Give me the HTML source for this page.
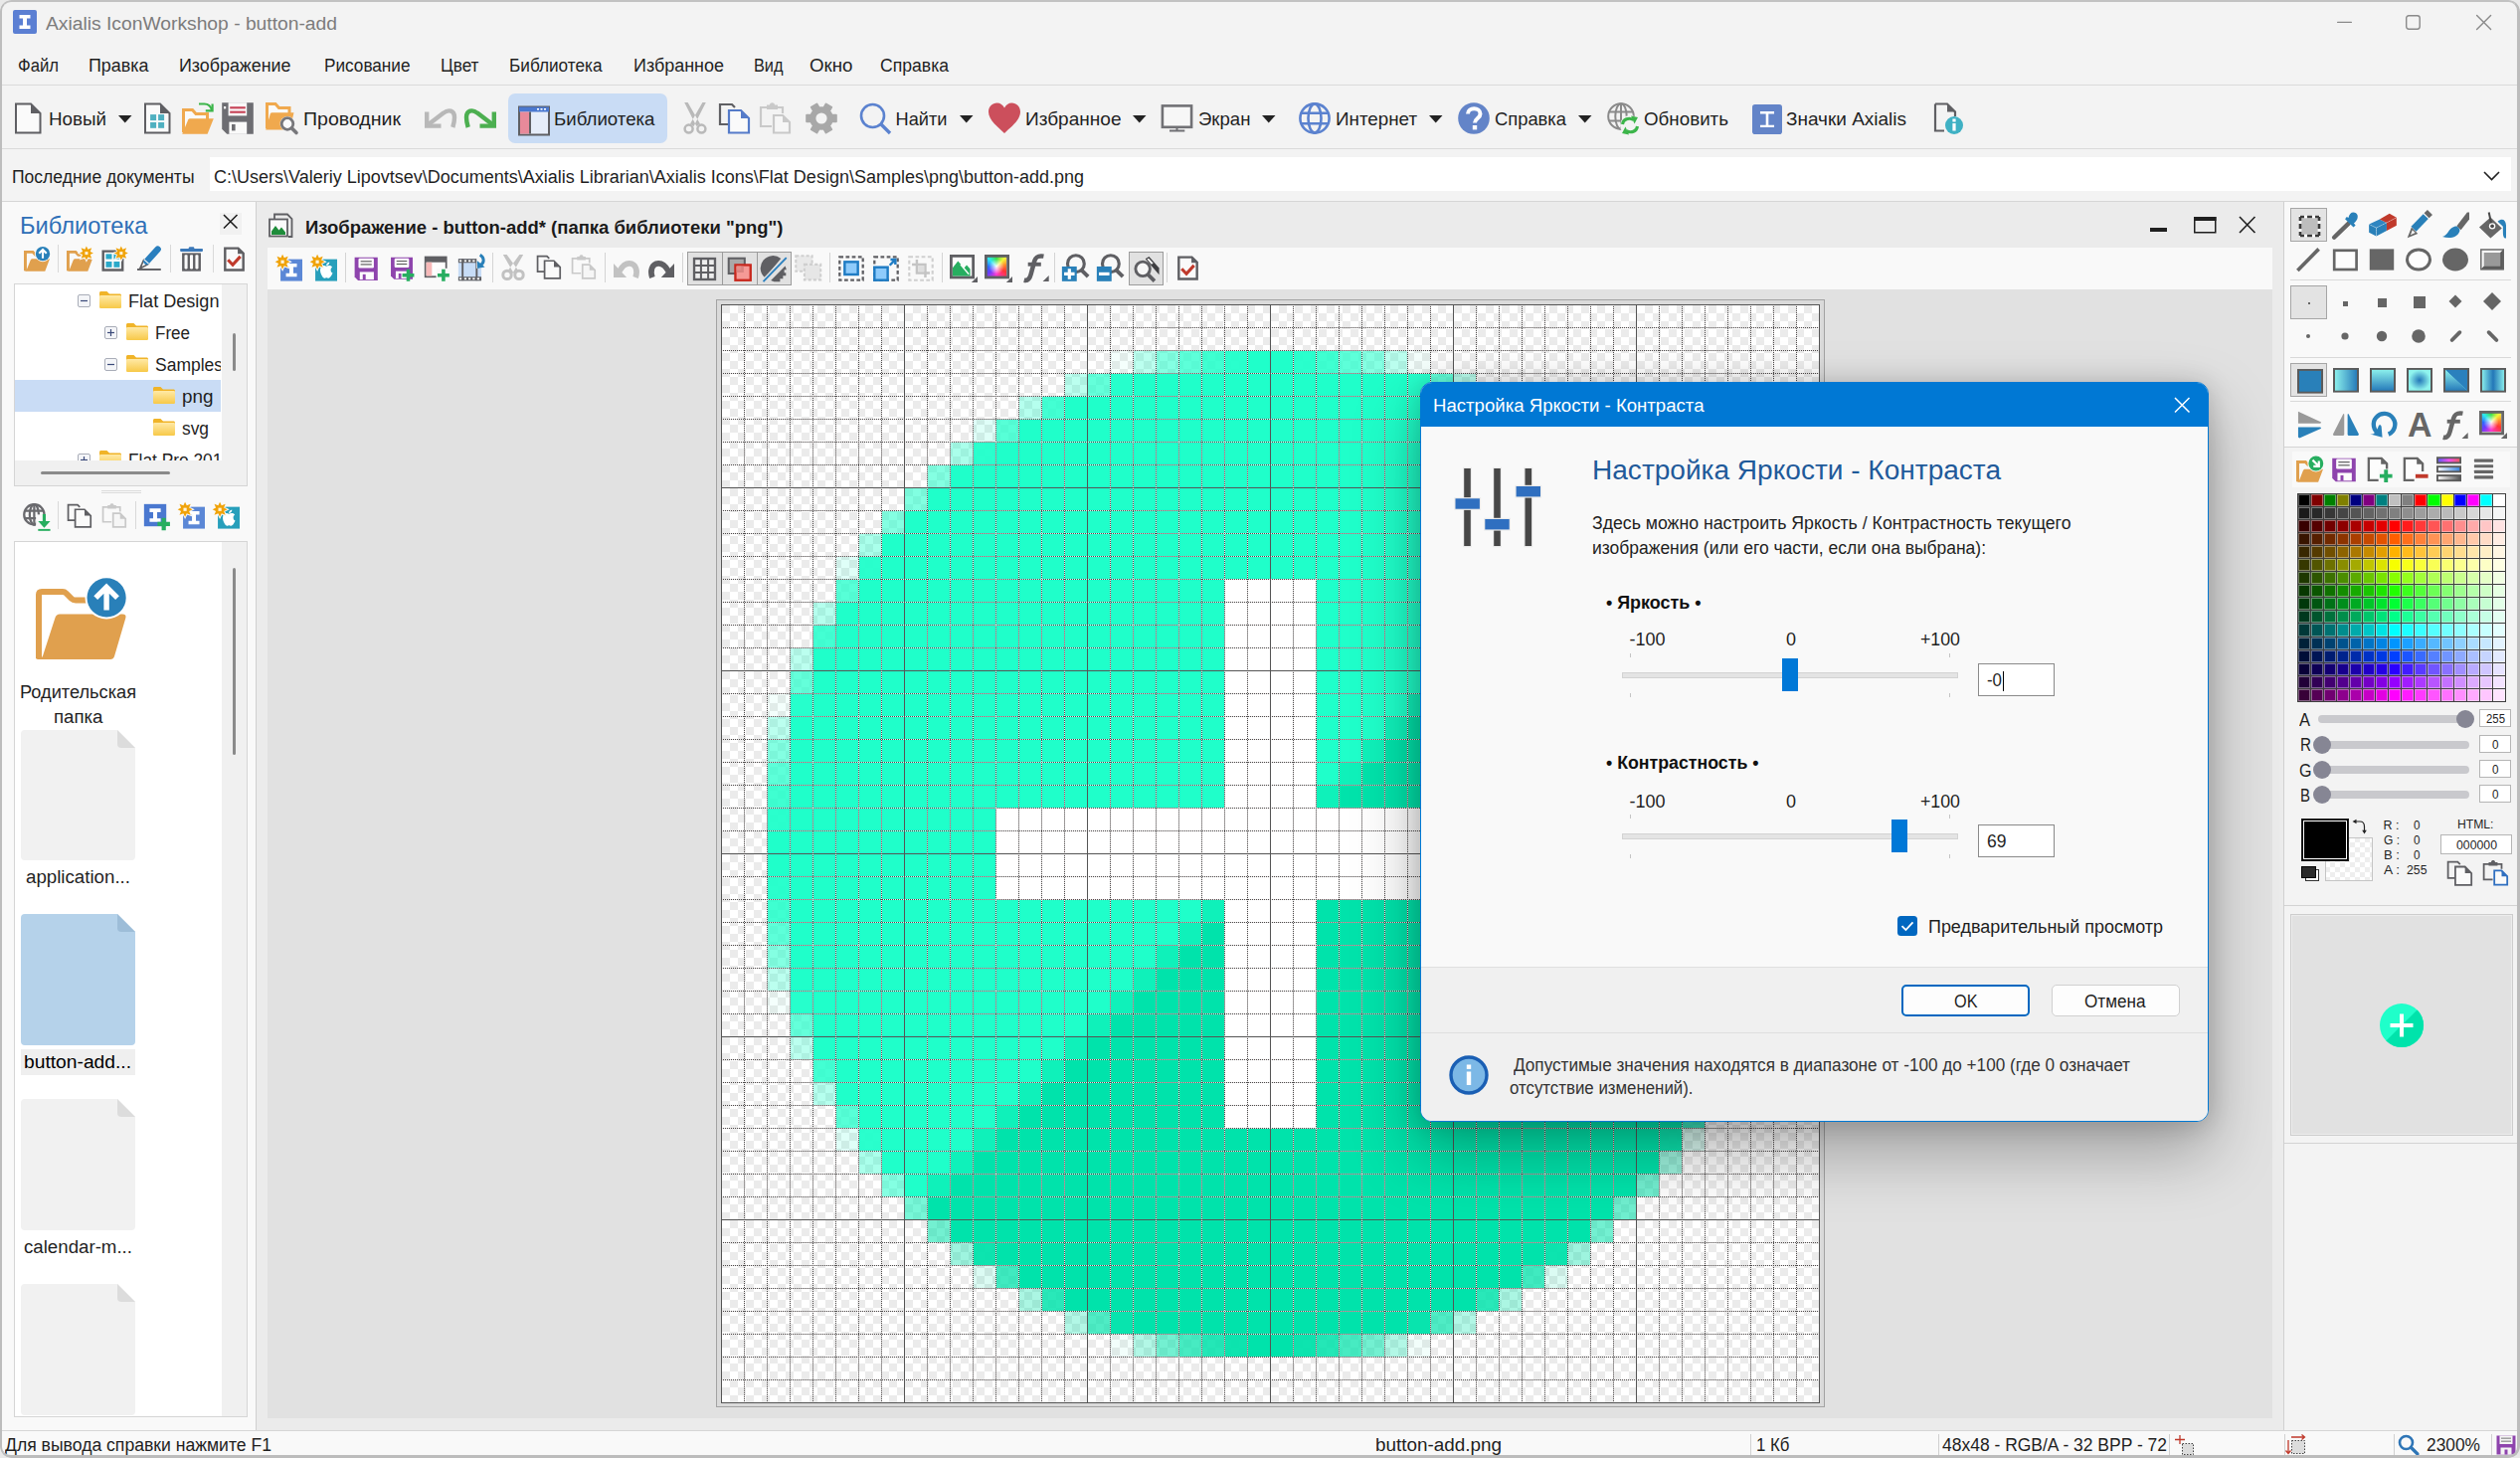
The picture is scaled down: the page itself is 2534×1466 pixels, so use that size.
<!DOCTYPE html>
<html lang="ru"><head><meta charset="utf-8"><title>Axialis IconWorkshop - button-add</title>
<style>
html,body{margin:0;padding:0;}
body{width:2534px;height:1466px;overflow:hidden;position:relative;background:#f3f3f3;font-family:"Liberation Sans", sans-serif;}
.a{position:absolute;box-sizing:border-box;display:block;}
svg.a{overflow:visible;}
.t{position:absolute;white-space:pre;line-height:1;transform-origin:0 50%;margin:0;padding:0;}

</style></head><body>
<header id="app-chrome" aria-label="Title bar, menu and toolbar">
<div class="a" style="left:13px;top:10px;width:24px;height:24px;background:#5b7fd3;border-radius:2px;"></div>
<svg class="a" style="left:13px;top:10px;" width="24" height="24" viewBox="0 0 24 24"><path d="M6.5 5H17.5V8.6H14V15.4H17.5V19H6.5V15.4H10V8.6H6.5Z" fill="#fff"/></svg>
<span id="t0" class="t" style="left:46.0px;top:15.3px;font-size:18px;color:#7c7c7c;transform:scaleX(1.0701);">Axialis IconWorkshop - button-add</span>
<svg class="a" style="left:2350px;top:21px;" width="18" height="3" viewBox="0 0 18 3"><rect width="15" height="1.3" y="0.8" rx="0.6" fill="#8a8a8a"/></svg>
<svg class="a" style="left:2419px;top:15px;" width="16" height="16" viewBox="0 0 16 16"><rect x="0.7" y="0.7" width="13.5" height="13.5" rx="2.4" fill="none" stroke="#8a8a8a" stroke-width="1.4"/></svg>
<svg class="a" style="left:2490px;top:15px;" width="16" height="16" viewBox="0 0 16 16"><path d="M0.6 0.6L14.6 14.6M14.6 0.6L0.6 14.6" stroke="#8a8a8a" stroke-width="1.4" stroke-linecap="round"/></svg>
<span id="t1" class="t" style="left:18.0px;top:57.3px;font-size:18px;color:#1f1f1f;transform:scaleX(0.9262);">Файл</span>
<span id="t2" class="t" style="left:88.5px;top:57.3px;font-size:18px;color:#1f1f1f;transform:scaleX(0.9949);">Правка</span>
<span id="t3" class="t" style="left:179.5px;top:57.3px;font-size:18px;color:#1f1f1f;transform:scaleX(0.9921);">Изображение</span>
<span id="t4" class="t" style="left:325.5px;top:57.3px;font-size:18px;color:#1f1f1f;transform:scaleX(0.9542);">Рисование</span>
<span id="t5" class="t" style="left:442.5px;top:57.3px;font-size:18px;color:#1f1f1f;transform:scaleX(0.9543);">Цвет</span>
<span id="t6" class="t" style="left:511.5px;top:57.3px;font-size:18px;color:#1f1f1f;transform:scaleX(0.9553);">Библиотека</span>
<span id="t7" class="t" style="left:637.0px;top:57.3px;font-size:18px;color:#1f1f1f;transform:scaleX(0.9974);">Избранное</span>
<span id="t8" class="t" style="left:757.5px;top:57.3px;font-size:18px;color:#1f1f1f;transform:scaleX(0.9055);">Вид</span>
<span id="t9" class="t" style="left:814.0px;top:57.3px;font-size:18px;color:#1f1f1f;transform:scaleX(1.0400);">Окно</span>
<span id="t10" class="t" style="left:885.0px;top:57.3px;font-size:18px;color:#1f1f1f;transform:scaleX(0.9770);">Справка</span>
<div class="a" style="left:2px;top:85px;width:2530px;height:1px;background:#dadada;"></div>
<svg class="a" style="left:12px;top:103px;" width="32" height="32" viewBox="0 0 32 32"><path d="M4 1.5H19L28.5 11V30.5H4Z" fill="#fafafa" stroke="#5f5f63" stroke-width="2"/><path d="M19 1.5V11H28.5Z" fill="#5f5f63"/></svg>
<span id="t11" class="t" style="left:49.0px;top:111.1px;font-size:18.2px;color:#1f1f1f;transform:scaleX(1.0328);">Новый</span>
<svg class="a" style="left:119px;top:116px;" width="14" height="8" viewBox="0 0 14 8"><path d="M0 0H13.5L6.75 7.5Z" fill="#222"/></svg>
<svg class="a" style="left:142px;top:103px;" width="32" height="32" viewBox="0 0 32 32"><path d="M4 1.5H19L28.5 11V30.5H4Z" fill="#fafafa" stroke="#5f5f63" stroke-width="2"/><path d="M19 1.5V11H28.5Z" fill="#5f5f63"/><rect x="9.1" y="12.1" width="6" height="6" fill="#4fb0c0"/><rect x="17.1" y="12.1" width="6" height="6" fill="#4fb0c0"/><rect x="9.1" y="20" width="6" height="5.8" fill="#4fb0c0"/><rect x="17.1" y="20" width="6" height="5.8" fill="#4fb0c0"/></svg>
<svg class="a" style="left:183px;top:103px;" width="32" height="32" viewBox="0 0 32 32"><path d="M1.5 30V7.5H10.5L14 11.5H25.5V17" fill="#fafafa" stroke="#f0a94e" stroke-width="3"/><path d="M8 16.2H31.8L25.6 31.7H0.2L6.3 17.3Q6.8 16.2 8 16.2Z" fill="#f0a94e"/><path d="M17 1.6H22.5C26.5 1.6 29 4 30 8" fill="none" stroke="#3cb54a" stroke-width="2"/><path d="M23.8 8.4H30.6V1.6" fill="none" stroke="#3cb54a" stroke-width="2.2"/></svg>
<svg class="a" style="left:223px;top:103px;" width="32" height="32" viewBox="0 0 32 32"><path d="M0.2 0.2H31.8V31.8H5.2L0.2 26.8Z" fill="#6d6d72"/><rect x="6.6" y="0.2" width="18.6" height="13.2" fill="#fafafa"/><rect x="8.2" y="4.2" width="15.6" height="2.2" fill="#c8465a"/><rect x="8.2" y="8.6" width="15.6" height="2.2" fill="#c8465a"/><rect x="7.4" y="19.6" width="17.8" height="12.2" fill="#fafafa"/><rect x="10" y="22" width="3.6" height="6.4" fill="#6d6d72"/><rect x="2" y="4" width="2.2" height="2.4" fill="#fafafa"/></svg>
<svg class="a" style="left:267px;top:103px;" width="32" height="32" viewBox="0 0 32 32"><path d="M1.5 26V1.5H10L13.5 5.5H24V11" fill="#fafafa" stroke="#f0a94e" stroke-width="3"/><path d="M6.5 10.2H28.5L24.5 27.6H0.2L4.8 11.5Q5.2 10.2 6.5 10.2Z" fill="#f0a94e"/><circle cx="22" cy="21.5" r="7.4" fill="#f3f3f3"/><circle cx="22" cy="21.5" r="5.8" fill="#fafafa" stroke="#77777b" stroke-width="2.8"/><path d="M26.5 26L31 30.5" stroke="#77777b" stroke-width="3.6" stroke-linecap="round"/></svg>
<span id="t12" class="t" style="left:304.5px;top:111.1px;font-size:18.2px;color:#1f1f1f;transform:scaleX(1.0740);">Проводник</span>
<svg class="a" style="left:427px;top:106px;" width="32" height="26" viewBox="0 0 32 26"><path d="M2.2 6.5V20.6H16.5" fill="none" stroke="#b8b8b8" stroke-width="4.4"/><path d="M3 19.8L19 7.6C24 3.6 30 5 30 12C30 16 29.4 18.5 28.3 22" fill="none" stroke="#b8b8b8" stroke-width="4.4"/></svg>
<svg class="a" style="left:467px;top:106px;" width="32" height="26" viewBox="0 0 32 26"><g transform="translate(32 0) scale(-1 1)"><path d="M2.2 6.5V20.6H16.5" fill="none" stroke="#4caf50" stroke-width="4.4"/><path d="M3 19.8L19 7.6C24 3.6 30 5 30 12C30 16 29.4 18.5 28.3 22" fill="none" stroke="#4caf50" stroke-width="4.4"/></g></svg>
<div class="a" style="left:511px;top:94px;width:160px;height:50px;background:#c9dcf5;border-radius:7px;"></div>
<svg class="a" style="left:521px;top:106px;" width="32" height="31" viewBox="0 0 32 31"><rect x="1" y="1.5" width="30" height="28" fill="#e6edf9" stroke="#5f5f63" stroke-width="2"/><rect x="1" y="1.5" width="30" height="5" fill="#4a78d0"/><rect x="2" y="6.5" width="9" height="22" fill="#e88a9a"/><rect x="11" y="6.5" width="2" height="22" fill="#5f5f63"/><rect x="19" y="3" width="2" height="1.6" fill="#fff"/><rect x="22.5" y="3" width="2" height="1.6" fill="#fff"/><rect x="26" y="3" width="2" height="1.6" fill="#fff"/></svg>
<span id="t13" class="t" style="left:556.5px;top:111.1px;font-size:18.2px;color:#1f1f1f;transform:scaleX(1.0262);">Библиотека</span>
<svg class="a" style="left:687px;top:103px;" width="24" height="32" viewBox="0 0 24 32"><path d="M1.2 0L4.6 0L17 21.5L13.4 24ZM22.8 0L19.4 0L7 21.5L10.6 24Z" fill="#b9b9b9"/><circle cx="5.6" cy="26.6" r="4" fill="none" stroke="#b9b9b9" stroke-width="2.5"/><circle cx="18.4" cy="26.6" r="4" fill="none" stroke="#b9b9b9" stroke-width="2.5"/></svg>
<svg class="a" style="left:722px;top:103px;" width="32" height="32" viewBox="0 0 32 32"><path d="M11 22H2V2H14L17 5" fill="none" stroke="#5f5f63" stroke-width="2.2"/><path d="M11 8H23L31 16V30.5H11Z" fill="#fafafa" stroke="#557bc9" stroke-width="2.2"/><path d="M23 8V16H31Z" fill="#557bc9"/></svg>
<svg class="a" style="left:763px;top:103px;" width="32" height="32" viewBox="0 0 32 32"><path d="M13 24H2V5H24V11" fill="none" stroke="#c9c9c9" stroke-width="2.2"/><path d="M8 5V2.5H11C11 -0.5 16 -0.5 16 2.5H19V7H8Z" fill="#c9c9c9"/><path d="M15 13H24L31 20V30.5H15Z" fill="#f6f6f6" stroke="#c9c9c9" stroke-width="2.2"/><path d="M24 13V20H31Z" fill="#c9c9c9"/></svg>
<svg class="a" style="left:810px;top:103px;" width="32" height="32" viewBox="0 0 32 32"><rect x="11.8" y="0.2" width="8.4" height="31.6" rx="1" fill="#a8a8a8" transform="rotate(30 16 16)"/><rect x="11.8" y="0.2" width="8.4" height="31.6" rx="1" fill="#a8a8a8" transform="rotate(90 16 16)"/><rect x="11.8" y="0.2" width="8.4" height="31.6" rx="1" fill="#a8a8a8" transform="rotate(150 16 16)"/><circle cx="16" cy="16" r="11.8" fill="#a8a8a8"/><circle cx="16" cy="16" r="5.6" fill="#f3f3f3"/></svg>
<svg class="a" style="left:864px;top:103px;" width="32" height="32" viewBox="0 0 32 32"><circle cx="13.5" cy="13.5" r="11.5" fill="none" stroke="#5b82cf" stroke-width="2.6"/><path d="M21.5 21.5L31 31" stroke="#5b82cf" stroke-width="3.4"/></svg>
<span id="t14" class="t" style="left:900.5px;top:111.1px;font-size:18.2px;color:#1f1f1f;">Найти</span>
<svg class="a" style="left:965px;top:116px;" width="14" height="8" viewBox="0 0 14 8"><path d="M0 0H13.5L6.75 7.5Z" fill="#222"/></svg>
<svg class="a" style="left:994px;top:103px;" width="32" height="32" viewBox="0 0 32 32"><path d="M16 31C10 25 0 18 0 9.5C0 4 4 0.5 8.5 0.5C12 0.5 14.5 2.5 16 5.5C17.5 2.5 20 0.5 23.5 0.5C28 0.5 32 4 32 9.5C32 18 22 25 16 31Z" fill="#cc4f5c"/></svg>
<span id="t15" class="t" style="left:1030.5px;top:111.1px;font-size:18.2px;color:#1f1f1f;transform:scaleX(1.0470);">Избранное</span>
<svg class="a" style="left:1139px;top:116px;" width="14" height="8" viewBox="0 0 14 8"><path d="M0 0H13.5L6.75 7.5Z" fill="#222"/></svg>
<svg class="a" style="left:1167px;top:104px;" width="33" height="31" viewBox="0 0 32 31"><rect x="1.4" y="2.4" width="29.2" height="21.4" fill="#f7f7f7" stroke="#717175" stroke-width="2.6"/><path d="M16 24V27.6M8.5 27.4H23.8" stroke="#717175" stroke-width="2"/></svg>
<span id="t16" class="t" style="left:1204.5px;top:111.1px;font-size:18.2px;color:#1f1f1f;transform:scaleX(1.0231);">Экран</span>
<svg class="a" style="left:1269px;top:116px;" width="14" height="8" viewBox="0 0 14 8"><path d="M0 0H13.5L6.75 7.5Z" fill="#222"/></svg>
<svg class="a" style="left:1306px;top:103px;" width="32" height="32" viewBox="0 0 32 32"><circle cx="16" cy="16" r="14.6" fill="none" stroke="#5b82cf" stroke-width="2.6"/><ellipse cx="16" cy="16" rx="6.5" ry="14.6" fill="none" stroke="#5b82cf" stroke-width="2.6"/><path d="M2.4 10.7H29.6M2.4 21.3H29.6" stroke="#5b82cf" stroke-width="2.6" fill="none"/></svg>
<span id="t17" class="t" style="left:1342.5px;top:111.1px;font-size:18.2px;color:#1f1f1f;transform:scaleX(1.0333);">Интернет</span>
<svg class="a" style="left:1437px;top:116px;" width="14" height="8" viewBox="0 0 14 8"><path d="M0 0H13.5L6.75 7.5Z" fill="#222"/></svg>
<svg class="a" style="left:1466px;top:103px;" width="32" height="32" viewBox="0 0 32 32"><circle cx="16" cy="16" r="15.8" fill="#6384c8"/><path d="M10 11.5C10 4.5 22.5 4.5 22.5 11.5C22.5 16 17 16 17 20.5" fill="none" stroke="#fff" stroke-width="4"/><rect x="14.8" y="23" width="4.4" height="4.4" fill="#fff"/></svg>
<span id="t18" class="t" style="left:1502.5px;top:111.1px;font-size:18.2px;color:#1f1f1f;transform:scaleX(1.0090);">Справка</span>
<svg class="a" style="left:1587px;top:116px;" width="14" height="8" viewBox="0 0 14 8"><path d="M0 0H13.5L6.75 7.5Z" fill="#222"/></svg>
<svg class="a" style="left:1616px;top:103px;" width="32" height="32" viewBox="0 0 32 32"><circle cx="14" cy="14" r="12.8" fill="none" stroke="#8a8a8a" stroke-width="2"/><ellipse cx="14" cy="14" rx="5.7" ry="12.8" fill="none" stroke="#8a8a8a" stroke-width="2"/><path d="M2.1 9.4H25.9M2.1 18.6H25.9" stroke="#8a8a8a" stroke-width="2" fill="none"/><path d="M14 1.1999999999999993V26.8" stroke="#8a8a8a" stroke-width="2"/><circle cx="23" cy="23" r="10" fill="#f3f3f3"/><path d="M15.5 22C16 17 22 14.5 26.5 17.5" fill="none" stroke="#3cb54a" stroke-width="3"/><path d="M24 13.5L31 15L27.5 21.5Z" fill="#3cb54a"/><path d="M30.5 24C30 29 24 31.5 19.5 28.5" fill="none" stroke="#3cb54a" stroke-width="3"/><path d="M22 32.5L15 31L18.5 24.5Z" fill="#3cb54a"/></svg>
<span id="t19" class="t" style="left:1652.5px;top:111.1px;font-size:18.2px;color:#1f1f1f;transform:scaleX(1.0321);">Обновить</span>
<svg class="a" style="left:1762px;top:105px;" width="30" height="30" viewBox="0 0 32 32"><rect x="0" y="0" width="32" height="32" rx="3" fill="#6384c8"/><path d="M8.5 7.5H23.5V10H17.4V22H23.5V24.5H8.5V22H14.6V10H8.5Z" fill="#fff"/></svg>
<span id="t20" class="t" style="left:1796.0px;top:111.1px;font-size:18.2px;color:#1f1f1f;transform:scaleX(1.0435);">Значки Axialis</span>
<svg class="a" style="left:1943px;top:103px;" width="32" height="32" viewBox="0 0 32 32"><path d="M3 1.5H15L23 9.5V14M3 1.5V28.5H12" fill="none" stroke="#5f5f63" stroke-width="2.2"/><path d="M15 1.5V9.5H23Z" fill="#5f5f63"/><circle cx="22" cy="23" r="9" fill="#3fb1c4"/><rect x="20.4" y="21" width="3.2" height="7.5" fill="#fff"/><rect x="20.4" y="16.5" width="3.2" height="3" fill="#fff"/></svg>
<div class="a" style="left:2px;top:149px;width:2530px;height:1px;background:#dadada;"></div>
<span id="t21" class="t" style="left:11.5px;top:169.3px;font-size:18px;color:#1f1f1f;transform:scaleX(0.9736);">Последние документы</span>
<div class="a" style="left:211px;top:158px;width:2314px;height:34px;background:#fff;"></div>
<span id="t22" class="t" style="left:215.0px;top:168.8px;font-size:18px;color:#1f1f1f;">C:\Users\Valeriy Lipovtsev\Documents\Axialis Librarian\Axialis Icons\Flat Design\Samples\png\button-add.png</span>
<svg class="a" style="left:2497px;top:172px;" width="18" height="11" viewBox="0 0 18 11"><path d="M1 1L8.5 8.5L16 1" fill="none" stroke="#222" stroke-width="1.6"/></svg>
<div class="a" style="left:2px;top:202px;width:2530px;height:1px;background:#d6d6d6;"></div>
</header>
<aside id="library-panel" aria-label="Библиотека">
<div class="a" style="left:2px;top:203px;width:255px;height:1235px;background:#f9f9f9;"></div>
<div class="a" style="left:257px;top:203px;width:1px;height:1235px;background:#d0d0d0;"></div>
<span id="t23" class="t" style="left:19.5px;top:214.7px;font-size:24px;color:#2e6fb7;transform:scaleX(0.9847);">Библиотека</span>
<div class="a" style="left:221px;top:214px;width:22px;height:22px;background:#f1f1f1;"></div>
<svg class="a" style="left:224px;top:215px;" width="16" height="16" viewBox="0 0 16 16"><path d="M1 1L14.5 14.5M14.5 1L1 14.5" stroke="#1a1a1a" stroke-width="1.5"/></svg>
<svg class="a" style="left:24px;top:247px;" width="26" height="26" viewBox="0 0 32 32"><path d="M1.8 31V7.8H11L14.5 11.5H22" fill="none" stroke="#e0a04e" stroke-width="3.6"/><path d="M10.5 16.4H32L26.2 31.6H0.5C3 31 3.5 30 4.2 28L8 18.5C8.6 17 9.3 16.4 10.5 16.4Z" fill="#e0a04e"/><circle cx="23.4" cy="10" r="10" fill="#f9f9f9"/><circle cx="23.4" cy="10" r="8.8" fill="#2980b9"/><path d="M23.4 5.2V15.6M18.8 9.6L23.4 5L28 9.6" stroke="#fff" stroke-width="2.6" fill="none"/></svg>
<div class="a" style="left:58px;top:246px;width:1px;height:28px;background:#d9d9d9;"></div>
<svg class="a" style="left:66.5px;top:247px;" width="26" height="26" viewBox="0 0 32 32"><path d="M1.8 31V7.8H11L14.5 11.5H18" fill="none" stroke="#e0a04e" stroke-width="3.6"/><path d="M10.5 16.4H32L26.2 31.6H0.5C3 31 3.5 30 4.2 28L8 18.5C8.6 17 9.3 16.4 10.5 16.4Z" fill="#e0a04e"/><polygon points="24.5,0.7 26.4,4.6 31.0,2.8 29.2,7.4 33.1,9.3 29.2,11.2 31.0,15.8 26.4,14.0 24.5,17.9 22.6,14.0 18.0,15.8 19.8,11.2 15.9,9.3 19.8,7.4 18.0,2.8 22.6,4.6" fill="#f9f9f9" stroke="#f9f9f9" stroke-width="2.4"/><polygon points="24.5,0.7 26.4,4.6 31.0,2.8 29.2,7.4 33.1,9.3 29.2,11.2 31.0,15.8 26.4,14.0 24.5,17.9 22.6,14.0 18.0,15.8 19.8,11.2 15.9,9.3 19.8,7.4 18.0,2.8 22.6,4.6" fill="#f0a30a"/><rect x="22.7" y="7.5" width="3.7" height="3.7" fill="#fff3d9"/></svg>
<svg class="a" style="left:101.5px;top:247px;" width="26" height="26" viewBox="0 0 32 32"><path d="M2.1 6.9H26.1V30.1H2.1Z" fill="#fafafa" stroke="#5f5f63" stroke-width="3"/><rect x="5.5" y="10.3" width="7.4" height="6.3" fill="#2aa9c9"/><rect x="15.3" y="10.3" width="7.3" height="6.3" fill="#2aa9c9"/><rect x="5.5" y="19.7" width="7.4" height="7.1" fill="#2aa9c9"/><rect x="15.3" y="19.7" width="7.3" height="7.1" fill="#2aa9c9"/><polygon points="24.4,0.7 26.3,4.6 30.9,2.8 29.1,7.4 33.0,9.3 29.1,11.2 30.9,15.8 26.3,14.0 24.4,17.9 22.5,14.0 17.9,15.8 19.7,11.2 15.8,9.3 19.7,7.4 17.9,2.8 22.5,4.6" fill="#f9f9f9" stroke="#f9f9f9" stroke-width="2.4"/><polygon points="24.4,0.7 26.3,4.6 30.9,2.8 29.1,7.4 33.0,9.3 29.1,11.2 30.9,15.8 26.3,14.0 24.4,17.9 22.5,14.0 17.9,15.8 19.7,11.2 15.8,9.3 19.7,7.4 17.9,2.8 22.5,4.6" fill="#f0a30a"/><rect x="22.6" y="7.5" width="3.7" height="3.7" fill="#fff3d9"/></svg>
<svg class="a" style="left:137px;top:247px;" width="26" height="26" viewBox="0 0 32 32"><path d="M1.2 29.5H30.5" stroke="#5f5f63" stroke-width="2.4"/><path d="M4.6 28.4L9.3 17.5L15.2 22.6Z" fill="#fafafa" stroke="#5f5f63" stroke-width="2" stroke-linejoin="round"/><path d="M4.6 28.4L6.2 24.6L8 26.4Z" fill="#5f5f63"/><path d="M13 19.5L26.6 4.4" stroke="#2a7fbe" stroke-width="8" stroke-linecap="round"/><path d="M9.6 17L15.8 22.6" stroke="#fafafa" stroke-width="1.4"/></svg>
<div class="a" style="left:171px;top:246px;width:1px;height:28px;background:#d9d9d9;"></div>
<svg class="a" style="left:180px;top:247px;" width="26" height="26" viewBox="0 0 32 32"><rect x="1.4" y="3.6" width="28.1" height="3.7" rx="1" fill="#3b78b8"/><path d="M11.8 3.8C11.8 1.8 13 1.4 14 1.4H17C18 1.4 19 1.8 19 3.8Z" fill="#3b78b8"/><rect x="3.8" y="9.1" width="23.2" height="22.5" fill="#5f5f63"/><rect x="6.8" y="11.4" width="3.8" height="17.4" rx="1" fill="#fafafa"/><rect x="13.5" y="11.4" width="3.8" height="17.4" rx="1" fill="#fafafa"/><rect x="20.2" y="11.4" width="3.8" height="17.4" rx="1" fill="#fafafa"/></svg>
<div class="a" style="left:214px;top:246px;width:1px;height:28px;background:#d9d9d9;"></div>
<svg class="a" style="left:222px;top:247px;" width="26" height="26" viewBox="0 0 32 32"><path d="M5.3 3.2H21.5L27.9 9.6V30.1H5.3Z" fill="#fafafa" stroke="#5f5f63" stroke-width="3"/><path d="M21 2V10H29Z" fill="#5f5f63"/><path d="M8.9 17.6L14.8 23.8L24.2 13.4" fill="none" stroke="#c0392b" stroke-width="3.8"/></svg>
<div class="a" style="left:14px;top:285px;width:235px;height:204px;background:#f0f0f0;border:1px solid #d5d5d5;"></div>
<div class="a" style="left:15px;top:286px;width:208px;height:177px;background:#fff;overflow:hidden;"></div>
<div class="a" style="left:15px;top:382px;width:207px;height:32px;background:#c9dcf5;"></div>
<div class="a" style="left:15px;top:286px;width:207px;height:177px;overflow:hidden;">
<svg class="a" style="left:63px;top:10px;" width="13" height="13" viewBox="0 0 13 13"><rect x="0.5" y="0.5" width="12" height="12" rx="1.5" fill="#f4f5f8" stroke="#a9adb8" stroke-width="1"/><path d="M3 6.5H10" stroke="#3b4a7a" stroke-width="1.2"/></svg>
<svg class="a" style="left:85px;top:7px;" width="22" height="17" viewBox="0 0 22 17"><defs><linearGradient id="fg" x1="0" y1="0" x2="0" y2="1"><stop offset="0" stop-color="#ffe9a6"/><stop offset="1" stop-color="#f7c948"/></linearGradient></defs><path d="M0 1.5C0 0.7 0.7 0 1.5 0H7.5L10 2.5H20.5C21.3 2.5 22 3.2 22 4V6H0Z" fill="#f0b429"/><rect x="0" y="4" width="22" height="13" rx="1.2" fill="url(#fg)"/></svg>
<span id="t24" class="t" style="left:113.5px;top:8.1px;font-size:18px;color:#1f1f1f;transform:scaleX(1.0050);">Flat Design</span>
<svg class="a" style="left:90px;top:42px;" width="13" height="13" viewBox="0 0 13 13"><rect x="0.5" y="0.5" width="12" height="12" rx="1.5" fill="#f4f5f8" stroke="#a9adb8" stroke-width="1"/><path d="M3 6.5H10" stroke="#3b4a7a" stroke-width="1.2"/><path d="M6.5 3V10" stroke="#3b4a7a" stroke-width="1.2"/></svg>
<svg class="a" style="left:112px;top:39px;" width="22" height="17" viewBox="0 0 22 17"><defs><linearGradient id="fg" x1="0" y1="0" x2="0" y2="1"><stop offset="0" stop-color="#ffe9a6"/><stop offset="1" stop-color="#f7c948"/></linearGradient></defs><path d="M0 1.5C0 0.7 0.7 0 1.5 0H7.5L10 2.5H20.5C21.3 2.5 22 3.2 22 4V6H0Z" fill="#f0b429"/><rect x="0" y="4" width="22" height="13" rx="1.2" fill="url(#fg)"/></svg>
<span id="t25" class="t" style="left:140.5px;top:40.1px;font-size:18px;color:#1f1f1f;transform:scaleX(0.9455);">Free</span>
<svg class="a" style="left:90px;top:74px;" width="13" height="13" viewBox="0 0 13 13"><rect x="0.5" y="0.5" width="12" height="12" rx="1.5" fill="#f4f5f8" stroke="#a9adb8" stroke-width="1"/><path d="M3 6.5H10" stroke="#3b4a7a" stroke-width="1.2"/></svg>
<svg class="a" style="left:112px;top:71px;" width="22" height="17" viewBox="0 0 22 17"><defs><linearGradient id="fg" x1="0" y1="0" x2="0" y2="1"><stop offset="0" stop-color="#ffe9a6"/><stop offset="1" stop-color="#f7c948"/></linearGradient></defs><path d="M0 1.5C0 0.7 0.7 0 1.5 0H7.5L10 2.5H20.5C21.3 2.5 22 3.2 22 4V6H0Z" fill="#f0b429"/><rect x="0" y="4" width="22" height="13" rx="1.2" fill="url(#fg)"/></svg>
<span id="t26" class="t" style="left:140.5px;top:72.1px;font-size:18px;color:#1f1f1f;transform:scaleX(0.9710);">Samples</span>
<svg class="a" style="left:139px;top:103px;" width="22" height="17" viewBox="0 0 22 17"><defs><linearGradient id="fg" x1="0" y1="0" x2="0" y2="1"><stop offset="0" stop-color="#ffe9a6"/><stop offset="1" stop-color="#f7c948"/></linearGradient></defs><path d="M0 1.5C0 0.7 0.7 0 1.5 0H7.5L10 2.5H20.5C21.3 2.5 22 3.2 22 4V6H0Z" fill="#f0b429"/><rect x="0" y="4" width="22" height="13" rx="1.2" fill="url(#fg)"/></svg>
<span id="t27" class="t" style="left:167.5px;top:104.1px;font-size:18px;color:#1f1f1f;transform:scaleX(1.0484);">png</span>
<svg class="a" style="left:139px;top:135px;" width="22" height="17" viewBox="0 0 22 17"><defs><linearGradient id="fg" x1="0" y1="0" x2="0" y2="1"><stop offset="0" stop-color="#ffe9a6"/><stop offset="1" stop-color="#f7c948"/></linearGradient></defs><path d="M0 1.5C0 0.7 0.7 0 1.5 0H7.5L10 2.5H20.5C21.3 2.5 22 3.2 22 4V6H0Z" fill="#f0b429"/><rect x="0" y="4" width="22" height="13" rx="1.2" fill="url(#fg)"/></svg>
<span id="t28" class="t" style="left:167.5px;top:136.1px;font-size:18px;color:#1f1f1f;transform:scaleX(0.9637);">svg</span>
<svg class="a" style="left:63px;top:170px;" width="13" height="13" viewBox="0 0 13 13"><rect x="0.5" y="0.5" width="12" height="12" rx="1.5" fill="#f4f5f8" stroke="#a9adb8" stroke-width="1"/><path d="M3 6.5H10" stroke="#3b4a7a" stroke-width="1.2"/><path d="M6.5 3V10" stroke="#3b4a7a" stroke-width="1.2"/></svg>
<svg class="a" style="left:85px;top:167px;" width="22" height="17" viewBox="0 0 22 17"><defs><linearGradient id="fg" x1="0" y1="0" x2="0" y2="1"><stop offset="0" stop-color="#ffe9a6"/><stop offset="1" stop-color="#f7c948"/></linearGradient></defs><path d="M0 1.5C0 0.7 0.7 0 1.5 0H7.5L10 2.5H20.5C21.3 2.5 22 3.2 22 4V6H0Z" fill="#f0b429"/><rect x="0" y="4" width="22" height="13" rx="1.2" fill="url(#fg)"/></svg>
<span id="t29" class="t" style="left:113.5px;top:168.1px;font-size:18px;color:#1f1f1f;transform:scaleX(0.9624);">Flat Pro 2015</span>
</div>
<div class="a" style="left:234px;top:335px;width:3px;height:38px;background:#8a8a8a;border-radius:2px;"></div>
<div class="a" style="left:41px;top:474px;width:130px;height:3px;background:#8a8a8a;border-radius:2px;"></div>
<div class="a" style="left:102px;top:493px;width:40px;height:1px;background:#dcdcdc;"></div>
<div class="a" style="left:102px;top:495px;width:40px;height:1px;background:#dcdcdc;"></div>
<svg class="a" style="left:23px;top:506px;" width="28" height="28" viewBox="0 0 32 32"><circle cx="13" cy="13" r="11.6" fill="none" stroke="#6a6a6e" stroke-width="2.6"/><ellipse cx="13" cy="13" rx="5.2" ry="11.6" fill="none" stroke="#6a6a6e" stroke-width="2.6"/><path d="M2.2 8.8H23.8M2.2 17.2H23.8" stroke="#6a6a6e" stroke-width="2.6" fill="none"/><path d="M13 1.4000000000000004V24.6" stroke="#6a6a6e" stroke-width="2.6"/><rect x="15" y="13" width="17" height="19" fill="#f9f9f9"/><path d="M22.7 12.5H26.3V20.5H31.5L24.5 28.2L17.5 20.5H22.7Z" fill="#27ae60"/><rect x="17.5" y="29.6" width="14" height="2.2" fill="#27ae60"/></svg>
<div class="a" style="left:58px;top:504px;width:1px;height:28px;background:#d9d9d9;"></div>
<svg class="a" style="left:67px;top:506px;" width="25" height="25" viewBox="0 0 32 32"><path d="M11 22H2V2H14L17 5" fill="none" stroke="#5f5f63" stroke-width="2.2"/><path d="M11 8H23L31 16V30.5H11Z" fill="#fafafa" stroke="#5f5f63" stroke-width="2.2"/><path d="M23 8V16H31Z" fill="#5f5f63"/></svg>
<svg class="a" style="left:102px;top:506px;" width="25" height="25" viewBox="0 0 32 32"><path d="M13 24H2V5H24V11" fill="none" stroke="#c9c9c9" stroke-width="2.2"/><path d="M8 5V2.5H11C11 -0.5 16 -0.5 16 2.5H19V7H8Z" fill="#c9c9c9"/><path d="M15 13H24L31 20V30.5H15Z" fill="#f6f6f6" stroke="#c9c9c9" stroke-width="2.2"/><path d="M24 13V20H31Z" fill="#c9c9c9"/></svg>
<div class="a" style="left:136px;top:504px;width:1px;height:28px;background:#d9d9d9;"></div>
<svg class="a" style="left:144px;top:506px;" width="27" height="27" viewBox="0 0 32 32"><rect x="1" y="1" width="26.5" height="26.5" fill="#4a78d0"/><path transform="translate(1 1) scale(1.325)" d="M5 4H15V7.2H11.8V12.8H15V16H5V12.8H8.2V7.2H5Z" fill="#fff"/><path d="M17.1 24.8H31.9M24.5 17.4V32.2" stroke="#27ae60" stroke-width="5"/></svg>
<svg class="a" style="left:179px;top:505px;" width="27" height="27" viewBox="0 0 32 32"><rect x="6" y="5.5" width="26" height="26" fill="#5b87d6"/><path transform="translate(6 5.5) scale(1.3)" d="M5 4H15V7.2H11.8V12.8H15V16H5V12.8H8.2V7.2H5Z" fill="#fff"/><polygon points="8.4,-0.2 10.4,3.8 15.0,2.0 13.2,6.6 17.2,8.6 13.2,10.6 15.0,15.2 10.4,13.4 8.4,17.4 6.4,13.4 1.8,15.2 3.6,10.6 -0.4,8.6 3.6,6.6 1.8,2.0 6.4,3.8" fill="#f9f9f9" stroke="#f9f9f9" stroke-width="2.4"/><polygon points="8.4,-0.2 10.4,3.8 15.0,2.0 13.2,6.6 17.2,8.6 13.2,10.6 15.0,15.2 10.4,13.4 8.4,17.4 6.4,13.4 1.8,15.2 3.6,10.6 -0.4,8.6 3.6,6.6 1.8,2.0 6.4,3.8" fill="#f0a30a"/><rect x="6.5" y="6.7" width="3.8" height="3.8" fill="#fff3d9"/></svg>
<svg class="a" style="left:214px;top:505px;" width="27" height="27" viewBox="0 0 32 32"><rect x="6" y="5.5" width="26" height="26" fill="#279fbb"/><g transform="translate(6 5.5) scale(1.3)"><path d="M10 6.5C8 5 4.5 6 4.5 10C4.5 13.5 7 17.5 8.5 17.5C9.3 17.5 9.5 17 10.3 17C11.1 17 11.3 17.5 12.1 17.5C13.6 17.5 15.8 13.8 15.8 12.5C13.5 11.5 13.8 8 15.5 7.3C14 5.3 11.5 5.8 10 6.5Z" fill="#fff"/><path d="M10 5.8C10 4 11.3 2.7 13 2.5C13 4.3 11.7 5.7 10 5.8Z" fill="#fff"/></g><polygon points="8.4,-0.2 10.4,3.8 15.0,2.0 13.2,6.6 17.2,8.6 13.2,10.6 15.0,15.2 10.4,13.4 8.4,17.4 6.4,13.4 1.8,15.2 3.6,10.6 -0.4,8.6 3.6,6.6 1.8,2.0 6.4,3.8" fill="#f9f9f9" stroke="#f9f9f9" stroke-width="2.4"/><polygon points="8.4,-0.2 10.4,3.8 15.0,2.0 13.2,6.6 17.2,8.6 13.2,10.6 15.0,15.2 10.4,13.4 8.4,17.4 6.4,13.4 1.8,15.2 3.6,10.6 -0.4,8.6 3.6,6.6 1.8,2.0 6.4,3.8" fill="#f0a30a"/><rect x="6.5" y="6.7" width="3.8" height="3.8" fill="#fff3d9"/></svg>
<div class="a" style="left:14px;top:544px;width:235px;height:881px;background:#f0f0f0;border:1px solid #d5d5d5;"></div>
<div class="a" style="left:15px;top:545px;width:208px;height:879px;background:#fff;"></div>
<div class="a" style="left:234px;top:571px;width:3px;height:188px;background:#8a8a8a;border-radius:2px;"></div>
<svg class="a" style="left:36px;top:575px;" width="96" height="92" viewBox="0 0 96 92"><path d="M3 87V23Q3 20 6 20H27Q29 20 30.5 21.5L36 27Q37.5 28.5 40 28.5H54" fill="none" stroke="#e0a04e" stroke-width="6"/><path d="M24 42.5H87Q91.5 42.5 90.3 46.5L79 85Q78 88 75 88H2Q0 88 0 86C4 88 6 87 7 84.5L19.5 46Q20.6 42.5 24 42.5Z" fill="#e0a04e"/><circle cx="71.1" cy="25.9" r="21.6" fill="#fff"/><circle cx="71.1" cy="25.9" r="19.6" fill="#2980b9"/><path d="M71.1 15V38.6M60.2 26.2L71.1 15.3L82 26.2" fill="none" stroke="#fff" stroke-width="5.4"/></svg>
<span id="t30" class="t" style="left:20.0px;top:687.3px;font-size:18px;color:#1f1f1f;transform:scaleX(1.0107);">Родительская</span>
<span id="t31" class="t" style="left:54.0px;top:712.3px;font-size:18px;color:#1f1f1f;transform:scaleX(1.0356);">папка</span>
<svg class="a" style="left:21px;top:734px;" width="115" height="131" viewBox="0 0 115 131"><path d="M4 0H97L115 18V127Q115 131 111 131H4Q0 131 0 127V4Q0 0 4 0Z" fill="#f1f1f1"/><path d="M97 0L115 18H101Q97 18 97 14Z" fill="#dcdcdc"/></svg>
<span id="t32" class="t" style="left:25.5px;top:872.8px;font-size:18px;color:#1f1f1f;transform:scaleX(1.0388);">application...</span>
<svg class="a" style="left:21px;top:919px;" width="115" height="132" viewBox="0 0 115 132"><path d="M4 0H97L115 18V128Q115 132 111 132H4Q0 132 0 128V4Q0 0 4 0Z" fill="#b5d2ea"/><path d="M97 0L115 18H101Q97 18 97 14Z" fill="#9dbdd8"/></svg>
<div class="a" style="left:21px;top:1054.5px;width:115px;height:26.5px;background:#efefef;"></div>
<span id="t33" class="t" style="left:24.0px;top:1058.8px;font-size:18px;color:#000;transform:scaleX(1.0685);">button-add...</span>
<svg class="a" style="left:21px;top:1105px;" width="115" height="132" viewBox="0 0 115 132"><path d="M4 0H97L115 18V128Q115 132 111 132H4Q0 132 0 128V4Q0 0 4 0Z" fill="#f1f1f1"/><path d="M97 0L115 18H101Q97 18 97 14Z" fill="#dcdcdc"/></svg>
<span id="t34" class="t" style="left:24.0px;top:1245.3px;font-size:18px;color:#1f1f1f;transform:scaleX(1.0376);">calendar-m...</span>
<svg class="a" style="left:21px;top:1291px;" width="115" height="132" viewBox="0 0 115 132"><path d="M4 0H97L115 18V128Q115 132 111 132H4Q0 132 0 128V4Q0 0 4 0Z" fill="#f1f1f1"/><path d="M97 0L115 18H101Q97 18 97 14Z" fill="#dcdcdc"/></svg>
</aside>
<main id="image-window" aria-label="Изображение">
<div class="a" style="left:258px;top:203px;width:2038px;height:1235px;background:#ebebeb;"></div>
<div class="a" style="left:269px;top:291px;width:2016px;height:1135px;background:#e1e1e1;"></div>
<div class="a" style="left:269px;top:249px;width:2016px;height:42px;background:#f9f9f9;"></div>
<svg class="a" style="left:270px;top:214px;" width="24" height="25" viewBox="0 0 24 25"><path d="M6 6V1.5H19L23.5 6V24H20" fill="none" stroke="#5f5f63" stroke-width="1.8"/><rect x="1" y="6.5" width="18" height="17" fill="#fafafa" stroke="#5f5f63" stroke-width="1.8"/><path d="M3 22V18.5L7 13L10.5 17.5L13 14.5L17 19.5V22Z" fill="#1e8c3a"/></svg>
<span id="t35" class="t" style="left:306.5px;top:220.3px;font-size:18px;color:#1a1a1a;font-weight:700;transform:scaleX(1.0253);">Изображение - button-add* (папка библиотеки "png")</span>
<svg class="a" style="left:2162px;top:229px;" width="18" height="5" viewBox="0 0 18 5"><rect width="17" height="4" fill="#1f1f1f"/></svg>
<svg class="a" style="left:2206px;top:218px;" width="23" height="17" viewBox="0 0 23 17"><rect x="0.75" y="0.75" width="21" height="15" fill="none" stroke="#1f1f1f" stroke-width="1.5"/><rect x="0" y="0" width="22.5" height="4" fill="#1f1f1f"/></svg>
<svg class="a" style="left:2251px;top:217px;" width="18" height="18" viewBox="0 0 18 18"><path d="M1 1L16.5 17M16.5 1L1 17" stroke="#1f1f1f" stroke-width="1.6"/></svg>
<svg class="a" width="0" height="0" style="left:0;top:0"><defs><linearGradient id="rainbow" x1="0" y1="0" x2="1" y2="1"><stop offset="0" stop-color="#3a6cf0"/><stop offset="0.3" stop-color="#39d6e8"/><stop offset="0.5" stop-color="#5be36a"/><stop offset="0.7" stop-color="#f5e04a"/><stop offset="1" stop-color="#f0413c"/></linearGradient></defs></svg>
<svg class="a" style="left:277px;top:256px;" width="27" height="27" viewBox="0 0 32 32"><rect x="6" y="5.5" width="26" height="26" fill="#5b87d6"/><path transform="translate(6 5.5) scale(1.3)" d="M5 4H15V7.2H11.8V12.8H15V16H5V12.8H8.2V7.2H5Z" fill="#fff"/><polygon points="8.4,-0.2 10.4,3.8 15.0,2.0 13.2,6.6 17.2,8.6 13.2,10.6 15.0,15.2 10.4,13.4 8.4,17.4 6.4,13.4 1.8,15.2 3.6,10.6 -0.4,8.6 3.6,6.6 1.8,2.0 6.4,3.8" fill="#f9f9f9" stroke="#f9f9f9" stroke-width="2.4"/><polygon points="8.4,-0.2 10.4,3.8 15.0,2.0 13.2,6.6 17.2,8.6 13.2,10.6 15.0,15.2 10.4,13.4 8.4,17.4 6.4,13.4 1.8,15.2 3.6,10.6 -0.4,8.6 3.6,6.6 1.8,2.0 6.4,3.8" fill="#f0a30a"/><rect x="6.5" y="6.7" width="3.8" height="3.8" fill="#fff3d9"/></svg>
<svg class="a" style="left:312px;top:256px;" width="27" height="27" viewBox="0 0 32 32"><rect x="6" y="5.5" width="26" height="26" fill="#279fbb"/><g transform="translate(6 5.5) scale(1.3)"><path d="M10 6.5C8 5 4.5 6 4.5 10C4.5 13.5 7 17.5 8.5 17.5C9.3 17.5 9.5 17 10.3 17C11.1 17 11.3 17.5 12.1 17.5C13.6 17.5 15.8 13.8 15.8 12.5C13.5 11.5 13.8 8 15.5 7.3C14 5.3 11.5 5.8 10 6.5Z" fill="#fff"/><path d="M10 5.8C10 4 11.3 2.7 13 2.5C13 4.3 11.7 5.7 10 5.8Z" fill="#fff"/></g><polygon points="8.4,-0.2 10.4,3.8 15.0,2.0 13.2,6.6 17.2,8.6 13.2,10.6 15.0,15.2 10.4,13.4 8.4,17.4 6.4,13.4 1.8,15.2 3.6,10.6 -0.4,8.6 3.6,6.6 1.8,2.0 6.4,3.8" fill="#f9f9f9" stroke="#f9f9f9" stroke-width="2.4"/><polygon points="8.4,-0.2 10.4,3.8 15.0,2.0 13.2,6.6 17.2,8.6 13.2,10.6 15.0,15.2 10.4,13.4 8.4,17.4 6.4,13.4 1.8,15.2 3.6,10.6 -0.4,8.6 3.6,6.6 1.8,2.0 6.4,3.8" fill="#f0a30a"/><rect x="6.5" y="6.7" width="3.8" height="3.8" fill="#fff3d9"/></svg>
<div class="a" style="left:347px;top:254px;width:1px;height:30px;background:#d4d4d4;"></div>
<svg class="a" style="left:355px;top:256px;" width="26" height="26" viewBox="0 0 32 32"><g transform="translate(2 3.5) scale(1.0555555555555556)"><path d="M0 0H27V27H4L0 23Z" fill="#8e44ad"/><rect x="4.5" y="1" width="18" height="11.5" rx="1.5" fill="#fdfdfd"/><rect x="7" y="4" width="13" height="1.3" fill="#555"/><rect x="7" y="7.6" width="13" height="1.3" fill="#555"/><rect x="6" y="17" width="16.5" height="9" fill="#fdfdfd"/><rect x="9.5" y="19.8" width="3.4" height="6.2" fill="#8e44ad"/></g></svg>
<svg class="a" style="left:391px;top:256px;" width="26" height="26" viewBox="0 0 32 32"><g transform="translate(2.5 3.5) scale(1.0)"><path d="M0 0H27V27H4L0 23Z" fill="#8e44ad"/><rect x="4.5" y="1" width="18" height="11.5" rx="1.5" fill="#fdfdfd"/><rect x="7" y="4" width="13" height="1.3" fill="#555"/><rect x="7" y="7.6" width="13" height="1.3" fill="#555"/><rect x="6" y="17" width="16.5" height="9" fill="#fdfdfd"/><rect x="9.5" y="19.8" width="3.4" height="6.2" fill="#8e44ad"/></g><rect x="16.5" y="17.5" width="14" height="14" fill="#f9f9f9" opacity="0.0"/><path d="M16.7 25.5H31.3M24 18.2V32.8" stroke="#27ae60" stroke-width="4.4"/></svg>
<svg class="a" style="left:426px;top:256px;" width="26" height="26" viewBox="0 0 32 32"><rect x="1" y="2" width="28" height="26.5" fill="#5f5f63"/><rect x="3.2" y="9.5" width="23.6" height="16.8" fill="#fdfdfd"/><rect x="3.2" y="9.5" width="7" height="16.8" fill="#f7b8b8"/><rect x="15.5" y="17" width="15" height="13" fill="#f9f9f9"/><path d="M17.2 25.5H31.8M24.5 18.2V32.8" stroke="#27ae60" stroke-width="4.4"/></svg>
<svg class="a" style="left:460px;top:255px;" width="28" height="28" viewBox="0 0 32 32"><rect x="1" y="6" width="26.5" height="25" fill="#c7dcf6"/><rect x="1" y="6" width="26.5" height="4.6" fill="#5f5f63"/><rect x="1" y="26.6" width="26.5" height="4.6" fill="#5f5f63"/><rect x="4.8" y="6" width="2.2" height="25" fill="#5f5f63"/><rect x="21" y="6" width="2.2" height="25" fill="#5f5f63"/><rect x="2.2" y="7.4" width="2.6" height="2" fill="#fff"/><rect x="2.2" y="27.9" width="2.6" height="2" fill="#fff"/><rect x="7.8" y="7.4" width="2.6" height="2" fill="#fff"/><rect x="7.8" y="27.9" width="2.6" height="2" fill="#fff"/><rect x="12.6" y="7.4" width="2.6" height="2" fill="#fff"/><rect x="12.6" y="27.9" width="2.6" height="2" fill="#fff"/><rect x="17.4" y="7.4" width="2.6" height="2" fill="#fff"/><rect x="17.4" y="27.9" width="2.6" height="2" fill="#fff"/><rect x="22.6" y="7.4" width="2.6" height="2" fill="#fff"/><rect x="22.6" y="27.9" width="2.6" height="2" fill="#fff"/><rect x="22" y="0" width="10" height="17" fill="#f9f9f9"/><path d="M26 1.5C31.5 5 31 11 26 13.5" fill="none" stroke="#2980b9" stroke-width="3.4"/><path d="M22.5 8L31.5 15.5L23 17Z" fill="#2980b9"/></svg>
<div class="a" style="left:495px;top:254px;width:1px;height:30px;background:#d4d4d4;"></div>
<svg class="a" style="left:504px;top:256px;" width="24" height="26" viewBox="0 0 24 26"><path d="M1.8 0L5.6 0L17.6 16.5L13 19.5ZM22.2 0L18.4 0L6.4 16.5L11 19.5Z" fill="#c2c2c2"/><circle cx="6" cy="20.4" r="4.2" fill="none" stroke="#c2c2c2" stroke-width="3"/><circle cx="18" cy="20.4" r="4.2" fill="none" stroke="#c2c2c2" stroke-width="3"/></svg>
<svg class="a" style="left:539px;top:256px;" width="25" height="25" viewBox="0 0 32 32"><path d="M11 22H2V2H14L17 5" fill="none" stroke="#5f5f63" stroke-width="2.2"/><path d="M11 8H23L31 16V30.5H11Z" fill="#fafafa" stroke="#5f5f63" stroke-width="2.2"/><path d="M23 8V16H31Z" fill="#5f5f63"/></svg>
<svg class="a" style="left:574px;top:256px;" width="25" height="25" viewBox="0 0 32 32"><path d="M13 24H2V5H24V11" fill="none" stroke="#c9c9c9" stroke-width="2.2"/><path d="M8 5V2.5H11C11 -0.5 16 -0.5 16 2.5H19V7H8Z" fill="#c9c9c9"/><path d="M15 13H24L31 20V30.5H15Z" fill="#f6f6f6" stroke="#c9c9c9" stroke-width="2.2"/><path d="M24 13V20H31Z" fill="#c9c9c9"/></svg>
<div class="a" style="left:608px;top:254px;width:1px;height:30px;background:#d4d4d4;"></div>
<svg class="a" style="left:617px;top:257px;" width="26" height="26" viewBox="0 0 32 32"><g transform="translate(32 0) scale(-1 1)"><path d="M4.8 27C2.2 20 3.5 10.2 12.5 9.8C18 9.6 21.5 13.5 25 19.5" fill="none" stroke="#c2c2c2" stroke-width="7"/><path d="M32 9.9V27H15.8Z" fill="#c2c2c2"/></g></svg>
<svg class="a" style="left:652px;top:257px;" width="26" height="26" viewBox="0 0 32 32"><path d="M4.8 27C2.2 20 3.5 10.2 12.5 9.8C18 9.6 21.5 13.5 25 19.5" fill="none" stroke="#5f5f63" stroke-width="7"/><path d="M32 9.9V27H15.8Z" fill="#5f5f63"/></svg>
<div class="a" style="left:686px;top:254px;width:1px;height:30px;background:#d4d4d4;"></div>
<div class="a" style="left:691px;top:253px;width:36px;height:34px;background:#e1e1e1;border:1px solid #9c9c9c;"></div>
<div class="a" style="left:726px;top:253px;width:36px;height:34px;background:#e1e1e1;border:1px solid #9c9c9c;"></div>
<div class="a" style="left:761px;top:253px;width:35px;height:34px;background:#e1e1e1;border:1px solid #9c9c9c;"></div>
<svg class="a" style="left:696px;top:258px;" width="25" height="25" viewBox="0 0 32 32"><rect x="2.6" y="2.6" width="26.8" height="26.8" fill="#ededed" stroke="#5f5f63" stroke-width="3"/><path d="M11.4 2V30M20.6 2V30M2 11.4H30M2 20.6H30" stroke="#5f5f63" stroke-width="2.6"/></svg>
<svg class="a" style="left:731px;top:258px;" width="25" height="25" viewBox="0 0 32 32"><rect x="2.2" y="2.2" width="20.6" height="19.6" fill="#a9a9a9" stroke="#5f5f63" stroke-width="2.6"/><rect x="10.8" y="10.8" width="19.6" height="19.6" fill="#f59a96" stroke="#c8281e" stroke-width="3"/><rect x="12.3" y="12.3" width="9.2" height="8.2" fill="#d98380"/><rect x="12.3" y="12.3" width="6" height="5" fill="#e58e8a"/></svg>
<svg class="a" style="left:765px;top:257px;" width="27" height="27" viewBox="0 0 32 32"><path d="M24 3.5A14.2 14.2 0 0 0 5 26.5Z" fill="#5f5f63"/><path d="M29 12.5A14 14 0 0 1 30.5 17H28V20.5H30V24H26.5V27.5H23V31H16L12 29.5Z" fill="#5f5f63"/><path d="M3 31L30.5 2.5" stroke="#e1e1e1" stroke-width="5.4"/><path d="M3 31L30.5 2.5" stroke="#2a7fbe" stroke-width="2.2"/></svg>
<svg class="a" style="left:798.5px;top:256px;" width="27.5" height="27.5" viewBox="0 0 32 32"><rect x="1.5" y="1.5" width="19" height="18" fill="#e9e9e9" stroke="#cfcfcf" stroke-width="2.4" stroke-dasharray="3.6 2.4"/><rect x="11.5" y="11.5" width="19" height="18" fill="#e6e6e6" stroke="#cfcfcf" stroke-width="2.4" stroke-dasharray="3.6 2.4"/></svg>
<div class="a" style="left:834px;top:254px;width:1px;height:30px;background:#d4d4d4;"></div>
<svg class="a" style="left:843px;top:257px;" width="26" height="26" viewBox="0 0 32 32"><rect x="1.6" y="1.6" width="28.8" height="28.8" fill="none" stroke="#5f5f63" stroke-width="2.8" stroke-dasharray="4.6 3"/><rect x="7.8" y="7.8" width="16.4" height="15.6" fill="#8ecbfb" stroke="#1f7cc4" stroke-width="3"/></svg>
<svg class="a" style="left:878px;top:257px;" width="26" height="26" viewBox="0 0 32 32"><rect x="1.6" y="1.6" width="28.8" height="28.8" fill="none" stroke="#5f5f63" stroke-width="2.8" stroke-dasharray="4.6 3"/><rect x="1.6" y="14.4" width="16.4" height="16" fill="#8ecbfb" stroke="#1f7cc4" stroke-width="3"/><path d="M20.5 12L27 5.5M21.5 5H27.5V11" fill="none" stroke="#1f7cc4" stroke-width="3"/></svg>
<svg class="a" style="left:913px;top:257px;" width="26" height="26" viewBox="0 0 32 32"><rect x="1.6" y="1.6" width="28.8" height="28.8" fill="none" stroke="#cfcfcf" stroke-width="2.6" stroke-dasharray="4.6 3"/><path d="M11 5V21.5H27M5 11H21.5V27" fill="none" stroke="#c4c4c4" stroke-width="3"/><rect x="12.5" y="12.5" width="7.4" height="7.4" fill="#dedede"/></svg>
<div class="a" style="left:947px;top:254px;width:1px;height:30px;background:#d4d4d4;"></div>
<svg class="a" style="left:955px;top:256px;" width="28" height="28" viewBox="0 0 32 32"><rect x="1.6" y="1.6" width="25.4" height="24.6" fill="#fdfdfd" stroke="#5f5f63" stroke-width="3.2"/><path d="M3.4 24.5V15L9.5 7.5L16.5 15.5L19.5 12L23.5 16.5V24.5Z" fill="#27ae60"/><path d="M12.5 11.5L22 22.5" stroke="#fdfdfd" stroke-width="1.6"/><path d="M32 32V25L25 32Z" fill="#5f5f63"/></svg>
<div class="a" style="left:992px;top:258px;width:20px;height:20px;background:radial-gradient(circle at 50% 50%,rgba(255,255,255,.95) 0,rgba(255,255,255,0) 55%),conic-gradient(from 0deg,#35e04a,#f4f43a 45deg,#ff8a2a 80deg,#ff3434 120deg,#ff38d0 180deg,#6a3cff 230deg,#2a6cff 270deg,#2fe8f0 315deg,#35e04a);"></div>
<svg class="a" style="left:990px;top:256px;" width="28" height="28" viewBox="0 0 32 32"><rect x="1.6" y="1.6" width="25.4" height="24.6" fill="none" stroke="#5f5f63" stroke-width="3.2"/><path d="M32 32V25L25 32Z" fill="#5f5f63"/></svg>
<svg class="a" style="left:1027.5px;top:255px;" width="28" height="28" viewBox="0 0 32 32"><path d="M2 30.5C6 31.5 8.5 29 9.8 24L14 8.5C15.5 3.5 18.5 2 24.5 3" fill="none" stroke="#5f5f63" stroke-width="5.2"/><path d="M6.5 12.3H21.5" stroke="#5f5f63" stroke-width="4.4"/><path d="M30.5 32V25L23.5 32Z" fill="#5f5f63"/></svg>
<div class="a" style="left:1060px;top:254px;width:1px;height:30px;background:#d4d4d4;"></div>
<svg class="a" style="left:1067px;top:255px;" width="28" height="28" viewBox="0 0 32 32"><circle cx="17" cy="11.6" r="9.6" fill="none" stroke="#5f5f63" stroke-width="3.6"/><path d="M23.5 19L31 26.5" stroke="#5f5f63" stroke-width="4.4"/><rect x="1" y="14.8" width="17" height="17" fill="#2980b9"/><path d="M3.5 23.3H15.5M9.5 17.3V29.3" stroke="#fff" stroke-width="3.6"/></svg>
<svg class="a" style="left:1102px;top:255px;" width="28" height="28" viewBox="0 0 32 32"><circle cx="17" cy="11.6" r="9.6" fill="none" stroke="#5f5f63" stroke-width="3.6"/><path d="M23.5 19L31 26.5" stroke="#5f5f63" stroke-width="4.4"/><rect x="1" y="14.8" width="17" height="17" fill="#2980b9"/><path d="M3.5 23.3H15.5" stroke="#fff" stroke-width="3.6"/></svg>
<div class="a" style="left:1135px;top:253px;width:35px;height:34px;background:#e1e1e1;border:1px solid #9c9c9c;"></div>
<svg class="a" style="left:1138.5px;top:256px;" width="27" height="27" viewBox="0 0 32 32"><path d="M15 5L19.5 2.5L31.5 16V24Z" fill="#3f3f42"/><path d="M17 5.4L19 4.3L24.5 10.5L22.3 11.7Z" fill="#fdfdfd"/><circle cx="12" cy="17" r="8.6" fill="#f7f7f7" stroke="#5f5f63" stroke-width="3.4"/><path d="M18 23.5L26 31.5" stroke="#5f5f63" stroke-width="4.4"/></svg>
<div class="a" style="left:1173px;top:254px;width:1px;height:30px;background:#d4d4d4;"></div>
<svg class="a" style="left:1180.5px;top:255.5px;" width="26" height="26" viewBox="0 0 32 32"><path d="M5.3 3.2H21.5L27.9 9.6V30.1H5.3Z" fill="#fafafa" stroke="#5f5f63" stroke-width="3"/><path d="M21 2V10H29Z" fill="#5f5f63"/><path d="M8.9 17.6L14.8 23.8L24.2 13.4" fill="none" stroke="#c0392b" stroke-width="3.8"/></svg>
<div class="a" style="left:720px;top:301px;width:1115px;height:1114px;background:#dadada;border:1px solid #a3a3a3;"></div>
<svg class="a" style="left:725px;top:306px" width="1105" height="1105" viewBox="0 0 1105 1105" shape-rendering="crispEdges"><defs><pattern id="chk" width="16" height="16" patternUnits="userSpaceOnUse" x="1" y="1"><rect width="16" height="16" fill="#fff"/><rect width="8" height="8" fill="#ebebeb"/><rect x="8" y="8" width="8" height="8" fill="#ebebeb"/></pattern></defs><rect x="0" y="0" width="1105" height="1105" fill="url(#chk)"/><rect x="392" y="47" width="23" height="23" fill="#1fffca" fill-opacity="0.05"/><rect x="415" y="47" width="23" height="23" fill="#1fffca" fill-opacity="0.3"/><rect x="438" y="47" width="23" height="23" fill="#1fffca" fill-opacity="0.55"/><rect x="461" y="47" width="23" height="23" fill="#1fffca" fill-opacity="0.72"/><rect x="484" y="47" width="23" height="23" fill="#1fffca" fill-opacity="0.86"/><rect x="507" y="47" width="23" height="23" fill="#1fffca" fill-opacity="0.95"/><rect x="530" y="47" width="46" height="23" fill="#1fffca"/><rect x="576" y="47" width="23" height="23" fill="#1fffca" fill-opacity="0.95"/><rect x="599" y="47" width="23" height="23" fill="#1fffca" fill-opacity="0.86"/><rect x="622" y="47" width="23" height="23" fill="#1fffca" fill-opacity="0.72"/><rect x="645" y="47" width="23" height="23" fill="#1fffca" fill-opacity="0.55"/><rect x="668" y="47" width="23" height="23" fill="#1fffca" fill-opacity="0.3"/><rect x="691" y="47" width="23" height="23" fill="#1fffca" fill-opacity="0.05"/><rect x="346" y="70" width="23" height="23" fill="#1fffca" fill-opacity="0.3"/><rect x="369" y="70" width="23" height="23" fill="#1fffca" fill-opacity="0.69"/><rect x="392" y="70" width="23" height="23" fill="#1fffca" fill-opacity="0.97"/><rect x="415" y="70" width="276" height="23" fill="#1fffca"/><rect x="691" y="70" width="23" height="23" fill="#1fffca" fill-opacity="0.97"/><rect x="714" y="70" width="23" height="23" fill="#1fffca" fill-opacity="0.69"/><rect x="737" y="70" width="23" height="23" fill="#1fffca" fill-opacity="0.3"/><rect x="300" y="93" width="23" height="23" fill="#1fffca" fill-opacity="0.33"/><rect x="323" y="93" width="23" height="23" fill="#1fffca" fill-opacity="0.84"/><rect x="346" y="93" width="414" height="23" fill="#1fffca"/><rect x="760" y="93" width="23" height="23" fill="#1fffca" fill-opacity="0.84"/><rect x="783" y="93" width="23" height="23" fill="#1fffca" fill-opacity="0.33"/><rect x="254" y="116" width="23" height="23" fill="#1fffca" fill-opacity="0.14"/><rect x="277" y="116" width="23" height="23" fill="#1fffca" fill-opacity="0.75"/><rect x="300" y="116" width="506" height="23" fill="#1fffca"/><rect x="806" y="116" width="23" height="23" fill="#1fffca" fill-opacity="0.75"/><rect x="829" y="116" width="23" height="23" fill="#1fffca" fill-opacity="0.14"/><rect x="231" y="139" width="23" height="23" fill="#1fffca" fill-opacity="0.38"/><rect x="254" y="139" width="23" height="23" fill="#1fffca" fill-opacity="0.95"/><rect x="277" y="139" width="552" height="23" fill="#1fffca"/><rect x="829" y="139" width="23" height="23" fill="#1fffca" fill-opacity="0.95"/><rect x="852" y="139" width="23" height="23" fill="#1fffca" fill-opacity="0.38"/><rect x="208" y="162" width="23" height="23" fill="#1fffca" fill-opacity="0.55"/><rect x="231" y="162" width="644" height="23" fill="#1fffca"/><rect x="875" y="162" width="23" height="23" fill="#1fffca" fill-opacity="0.55"/><rect x="185" y="185" width="23" height="23" fill="#1fffca" fill-opacity="0.56"/><rect x="208" y="185" width="690" height="23" fill="#1fffca"/><rect x="898" y="185" width="23" height="23" fill="#0ff1ba" fill-opacity="0.56"/><rect x="162" y="208" width="23" height="23" fill="#1fffca" fill-opacity="0.55"/><rect x="185" y="208" width="690" height="23" fill="#1fffca"/><rect x="875" y="208" width="23" height="23" fill="#0ff1ba"/><rect x="898" y="208" width="23" height="23" fill="#00e3ab"/><rect x="921" y="208" width="23" height="23" fill="#00e3ab" fill-opacity="0.55"/><rect x="139" y="231" width="23" height="23" fill="#1fffca" fill-opacity="0.38"/><rect x="162" y="231" width="690" height="23" fill="#1fffca"/><rect x="852" y="231" width="23" height="23" fill="#0ff1ba"/><rect x="875" y="231" width="69" height="23" fill="#00e3ab"/><rect x="944" y="231" width="23" height="23" fill="#00e3ab" fill-opacity="0.38"/><rect x="116" y="254" width="23" height="23" fill="#1fffca" fill-opacity="0.14"/><rect x="139" y="254" width="23" height="23" fill="#1fffca" fill-opacity="0.95"/><rect x="162" y="254" width="667" height="23" fill="#1fffca"/><rect x="829" y="254" width="23" height="23" fill="#0ff1ba"/><rect x="852" y="254" width="92" height="23" fill="#00e3ab"/><rect x="944" y="254" width="23" height="23" fill="#00e3ab" fill-opacity="0.95"/><rect x="967" y="254" width="23" height="23" fill="#00e3ab" fill-opacity="0.14"/><rect x="116" y="277" width="23" height="23" fill="#1fffca" fill-opacity="0.75"/><rect x="139" y="277" width="368" height="23" fill="#1fffca"/><rect x="507" y="277" width="92" height="23" fill="#ffffff"/><rect x="599" y="277" width="207" height="23" fill="#1fffca"/><rect x="806" y="277" width="23" height="23" fill="#0ff1ba"/><rect x="829" y="277" width="138" height="23" fill="#00e3ab"/><rect x="967" y="277" width="23" height="23" fill="#00e3ab" fill-opacity="0.75"/><rect x="93" y="300" width="23" height="23" fill="#1fffca" fill-opacity="0.33"/><rect x="116" y="300" width="391" height="23" fill="#1fffca"/><rect x="507" y="300" width="92" height="23" fill="#ffffff"/><rect x="599" y="300" width="184" height="23" fill="#1fffca"/><rect x="783" y="300" width="23" height="23" fill="#0ff1ba"/><rect x="806" y="300" width="184" height="23" fill="#00e3ab"/><rect x="990" y="300" width="23" height="23" fill="#00e3ab" fill-opacity="0.33"/><rect x="93" y="323" width="23" height="23" fill="#1fffca" fill-opacity="0.84"/><rect x="116" y="323" width="391" height="23" fill="#1fffca"/><rect x="507" y="323" width="92" height="23" fill="#ffffff"/><rect x="599" y="323" width="161" height="23" fill="#1fffca"/><rect x="760" y="323" width="23" height="23" fill="#0ff1ba"/><rect x="783" y="323" width="207" height="23" fill="#00e3ab"/><rect x="990" y="323" width="23" height="23" fill="#00e3ab" fill-opacity="0.84"/><rect x="70" y="346" width="23" height="23" fill="#1fffca" fill-opacity="0.3"/><rect x="93" y="346" width="414" height="23" fill="#1fffca"/><rect x="507" y="346" width="92" height="23" fill="#ffffff"/><rect x="599" y="346" width="138" height="23" fill="#1fffca"/><rect x="737" y="346" width="23" height="23" fill="#0ff1ba"/><rect x="760" y="346" width="253" height="23" fill="#00e3ab"/><rect x="1013" y="346" width="23" height="23" fill="#00e3ab" fill-opacity="0.3"/><rect x="70" y="369" width="23" height="23" fill="#1fffca" fill-opacity="0.69"/><rect x="93" y="369" width="414" height="23" fill="#1fffca"/><rect x="507" y="369" width="92" height="23" fill="#ffffff"/><rect x="599" y="369" width="115" height="23" fill="#1fffca"/><rect x="714" y="369" width="23" height="23" fill="#0ff1ba"/><rect x="737" y="369" width="276" height="23" fill="#00e3ab"/><rect x="1013" y="369" width="23" height="23" fill="#00e3ab" fill-opacity="0.69"/><rect x="47" y="392" width="23" height="23" fill="#1fffca" fill-opacity="0.05"/><rect x="70" y="392" width="23" height="23" fill="#1fffca" fill-opacity="0.97"/><rect x="93" y="392" width="414" height="23" fill="#1fffca"/><rect x="507" y="392" width="92" height="23" fill="#ffffff"/><rect x="599" y="392" width="92" height="23" fill="#1fffca"/><rect x="691" y="392" width="23" height="23" fill="#0ff1ba"/><rect x="714" y="392" width="299" height="23" fill="#00e3ab"/><rect x="1013" y="392" width="23" height="23" fill="#00e3ab" fill-opacity="0.97"/><rect x="1036" y="392" width="23" height="23" fill="#00e3ab" fill-opacity="0.05"/><rect x="47" y="415" width="23" height="23" fill="#1fffca" fill-opacity="0.3"/><rect x="70" y="415" width="437" height="23" fill="#1fffca"/><rect x="507" y="415" width="92" height="23" fill="#ffffff"/><rect x="599" y="415" width="69" height="23" fill="#1fffca"/><rect x="668" y="415" width="23" height="23" fill="#0ff1ba"/><rect x="691" y="415" width="345" height="23" fill="#00e3ab"/><rect x="1036" y="415" width="23" height="23" fill="#00e3ab" fill-opacity="0.3"/><rect x="47" y="438" width="23" height="23" fill="#1fffca" fill-opacity="0.55"/><rect x="70" y="438" width="437" height="23" fill="#1fffca"/><rect x="507" y="438" width="92" height="23" fill="#ffffff"/><rect x="599" y="438" width="46" height="23" fill="#1fffca"/><rect x="645" y="438" width="23" height="23" fill="#0ff1ba"/><rect x="668" y="438" width="368" height="23" fill="#00e3ab"/><rect x="1036" y="438" width="23" height="23" fill="#00e3ab" fill-opacity="0.55"/><rect x="47" y="461" width="23" height="23" fill="#1fffca" fill-opacity="0.72"/><rect x="70" y="461" width="437" height="23" fill="#1fffca"/><rect x="507" y="461" width="92" height="23" fill="#ffffff"/><rect x="599" y="461" width="23" height="23" fill="#1fffca"/><rect x="622" y="461" width="23" height="23" fill="#0ff1ba"/><rect x="645" y="461" width="391" height="23" fill="#00e3ab"/><rect x="1036" y="461" width="23" height="23" fill="#00e3ab" fill-opacity="0.72"/><rect x="47" y="484" width="23" height="23" fill="#1fffca" fill-opacity="0.86"/><rect x="70" y="484" width="437" height="23" fill="#1fffca"/><rect x="507" y="484" width="92" height="23" fill="#ffffff"/><rect x="599" y="484" width="23" height="23" fill="#0ff1ba"/><rect x="622" y="484" width="414" height="23" fill="#00e3ab"/><rect x="1036" y="484" width="23" height="23" fill="#00e3ab" fill-opacity="0.86"/><rect x="47" y="507" width="23" height="23" fill="#1fffca" fill-opacity="0.95"/><rect x="70" y="507" width="207" height="23" fill="#1fffca"/><rect x="277" y="507" width="552" height="23" fill="#ffffff"/><rect x="829" y="507" width="207" height="23" fill="#00e3ab"/><rect x="1036" y="507" width="23" height="23" fill="#00e3ab" fill-opacity="0.95"/><rect x="47" y="530" width="230" height="23" fill="#1fffca"/><rect x="277" y="530" width="552" height="23" fill="#ffffff"/><rect x="829" y="530" width="230" height="23" fill="#00e3ab"/><rect x="47" y="553" width="230" height="23" fill="#1fffca"/><rect x="277" y="553" width="552" height="23" fill="#ffffff"/><rect x="829" y="553" width="230" height="23" fill="#00e3ab"/><rect x="47" y="576" width="23" height="23" fill="#1fffca" fill-opacity="0.95"/><rect x="70" y="576" width="207" height="23" fill="#1fffca"/><rect x="277" y="576" width="552" height="23" fill="#ffffff"/><rect x="829" y="576" width="207" height="23" fill="#00e3ab"/><rect x="1036" y="576" width="23" height="23" fill="#00e3ab" fill-opacity="0.95"/><rect x="47" y="599" width="23" height="23" fill="#1fffca" fill-opacity="0.86"/><rect x="70" y="599" width="414" height="23" fill="#1fffca"/><rect x="484" y="599" width="23" height="23" fill="#0ff1ba"/><rect x="507" y="599" width="92" height="23" fill="#ffffff"/><rect x="599" y="599" width="437" height="23" fill="#00e3ab"/><rect x="1036" y="599" width="23" height="23" fill="#00e3ab" fill-opacity="0.86"/><rect x="47" y="622" width="23" height="23" fill="#1fffca" fill-opacity="0.72"/><rect x="70" y="622" width="391" height="23" fill="#1fffca"/><rect x="461" y="622" width="23" height="23" fill="#0ff1ba"/><rect x="484" y="622" width="23" height="23" fill="#00e3ab"/><rect x="507" y="622" width="92" height="23" fill="#ffffff"/><rect x="599" y="622" width="437" height="23" fill="#00e3ab"/><rect x="1036" y="622" width="23" height="23" fill="#00e3ab" fill-opacity="0.72"/><rect x="47" y="645" width="23" height="23" fill="#1fffca" fill-opacity="0.55"/><rect x="70" y="645" width="368" height="23" fill="#1fffca"/><rect x="438" y="645" width="23" height="23" fill="#0ff1ba"/><rect x="461" y="645" width="46" height="23" fill="#00e3ab"/><rect x="507" y="645" width="92" height="23" fill="#ffffff"/><rect x="599" y="645" width="437" height="23" fill="#00e3ab"/><rect x="1036" y="645" width="23" height="23" fill="#00e3ab" fill-opacity="0.55"/><rect x="47" y="668" width="23" height="23" fill="#1fffca" fill-opacity="0.3"/><rect x="70" y="668" width="345" height="23" fill="#1fffca"/><rect x="415" y="668" width="23" height="23" fill="#0ff1ba"/><rect x="438" y="668" width="69" height="23" fill="#00e3ab"/><rect x="507" y="668" width="92" height="23" fill="#ffffff"/><rect x="599" y="668" width="437" height="23" fill="#00e3ab"/><rect x="1036" y="668" width="23" height="23" fill="#00e3ab" fill-opacity="0.3"/><rect x="47" y="691" width="23" height="23" fill="#1fffca" fill-opacity="0.05"/><rect x="70" y="691" width="23" height="23" fill="#1fffca" fill-opacity="0.97"/><rect x="93" y="691" width="299" height="23" fill="#1fffca"/><rect x="392" y="691" width="23" height="23" fill="#0ff1ba"/><rect x="415" y="691" width="92" height="23" fill="#00e3ab"/><rect x="507" y="691" width="92" height="23" fill="#ffffff"/><rect x="599" y="691" width="414" height="23" fill="#00e3ab"/><rect x="1013" y="691" width="23" height="23" fill="#00e3ab" fill-opacity="0.97"/><rect x="1036" y="691" width="23" height="23" fill="#00e3ab" fill-opacity="0.05"/><rect x="70" y="714" width="23" height="23" fill="#1fffca" fill-opacity="0.69"/><rect x="93" y="714" width="276" height="23" fill="#1fffca"/><rect x="369" y="714" width="23" height="23" fill="#0ff1ba"/><rect x="392" y="714" width="115" height="23" fill="#00e3ab"/><rect x="507" y="714" width="92" height="23" fill="#ffffff"/><rect x="599" y="714" width="414" height="23" fill="#00e3ab"/><rect x="1013" y="714" width="23" height="23" fill="#00e3ab" fill-opacity="0.69"/><rect x="70" y="737" width="23" height="23" fill="#1fffca" fill-opacity="0.3"/><rect x="93" y="737" width="253" height="23" fill="#1fffca"/><rect x="346" y="737" width="23" height="23" fill="#0ff1ba"/><rect x="369" y="737" width="138" height="23" fill="#00e3ab"/><rect x="507" y="737" width="92" height="23" fill="#ffffff"/><rect x="599" y="737" width="414" height="23" fill="#00e3ab"/><rect x="1013" y="737" width="23" height="23" fill="#00e3ab" fill-opacity="0.3"/><rect x="93" y="760" width="23" height="23" fill="#1fffca" fill-opacity="0.84"/><rect x="116" y="760" width="207" height="23" fill="#1fffca"/><rect x="323" y="760" width="23" height="23" fill="#0ff1ba"/><rect x="346" y="760" width="161" height="23" fill="#00e3ab"/><rect x="507" y="760" width="92" height="23" fill="#ffffff"/><rect x="599" y="760" width="391" height="23" fill="#00e3ab"/><rect x="990" y="760" width="23" height="23" fill="#00e3ab" fill-opacity="0.84"/><rect x="93" y="783" width="23" height="23" fill="#1fffca" fill-opacity="0.33"/><rect x="116" y="783" width="184" height="23" fill="#1fffca"/><rect x="300" y="783" width="23" height="23" fill="#0ff1ba"/><rect x="323" y="783" width="184" height="23" fill="#00e3ab"/><rect x="507" y="783" width="92" height="23" fill="#ffffff"/><rect x="599" y="783" width="391" height="23" fill="#00e3ab"/><rect x="990" y="783" width="23" height="23" fill="#00e3ab" fill-opacity="0.33"/><rect x="116" y="806" width="23" height="23" fill="#1fffca" fill-opacity="0.75"/><rect x="139" y="806" width="138" height="23" fill="#1fffca"/><rect x="277" y="806" width="23" height="23" fill="#0ff1ba"/><rect x="300" y="806" width="207" height="23" fill="#00e3ab"/><rect x="507" y="806" width="92" height="23" fill="#ffffff"/><rect x="599" y="806" width="368" height="23" fill="#00e3ab"/><rect x="967" y="806" width="23" height="23" fill="#00e3ab" fill-opacity="0.75"/><rect x="116" y="829" width="23" height="23" fill="#1fffca" fill-opacity="0.14"/><rect x="139" y="829" width="23" height="23" fill="#1fffca" fill-opacity="0.95"/><rect x="162" y="829" width="92" height="23" fill="#1fffca"/><rect x="254" y="829" width="23" height="23" fill="#0ff1ba"/><rect x="277" y="829" width="667" height="23" fill="#00e3ab"/><rect x="944" y="829" width="23" height="23" fill="#00e3ab" fill-opacity="0.95"/><rect x="967" y="829" width="23" height="23" fill="#00e3ab" fill-opacity="0.14"/><rect x="139" y="852" width="23" height="23" fill="#1fffca" fill-opacity="0.38"/><rect x="162" y="852" width="69" height="23" fill="#1fffca"/><rect x="231" y="852" width="23" height="23" fill="#0ff1ba"/><rect x="254" y="852" width="690" height="23" fill="#00e3ab"/><rect x="944" y="852" width="23" height="23" fill="#00e3ab" fill-opacity="0.38"/><rect x="162" y="875" width="23" height="23" fill="#1fffca" fill-opacity="0.55"/><rect x="185" y="875" width="23" height="23" fill="#1fffca"/><rect x="208" y="875" width="23" height="23" fill="#0ff1ba"/><rect x="231" y="875" width="690" height="23" fill="#00e3ab"/><rect x="921" y="875" width="23" height="23" fill="#00e3ab" fill-opacity="0.55"/><rect x="185" y="898" width="23" height="23" fill="#0ff1ba" fill-opacity="0.56"/><rect x="208" y="898" width="690" height="23" fill="#00e3ab"/><rect x="898" y="898" width="23" height="23" fill="#00e3ab" fill-opacity="0.56"/><rect x="208" y="921" width="23" height="23" fill="#00e3ab" fill-opacity="0.55"/><rect x="231" y="921" width="644" height="23" fill="#00e3ab"/><rect x="875" y="921" width="23" height="23" fill="#00e3ab" fill-opacity="0.55"/><rect x="231" y="944" width="23" height="23" fill="#00e3ab" fill-opacity="0.38"/><rect x="254" y="944" width="23" height="23" fill="#00e3ab" fill-opacity="0.95"/><rect x="277" y="944" width="552" height="23" fill="#00e3ab"/><rect x="829" y="944" width="23" height="23" fill="#00e3ab" fill-opacity="0.95"/><rect x="852" y="944" width="23" height="23" fill="#00e3ab" fill-opacity="0.38"/><rect x="254" y="967" width="23" height="23" fill="#00e3ab" fill-opacity="0.14"/><rect x="277" y="967" width="23" height="23" fill="#00e3ab" fill-opacity="0.75"/><rect x="300" y="967" width="506" height="23" fill="#00e3ab"/><rect x="806" y="967" width="23" height="23" fill="#00e3ab" fill-opacity="0.75"/><rect x="829" y="967" width="23" height="23" fill="#00e3ab" fill-opacity="0.14"/><rect x="300" y="990" width="23" height="23" fill="#00e3ab" fill-opacity="0.33"/><rect x="323" y="990" width="23" height="23" fill="#00e3ab" fill-opacity="0.84"/><rect x="346" y="990" width="414" height="23" fill="#00e3ab"/><rect x="760" y="990" width="23" height="23" fill="#00e3ab" fill-opacity="0.84"/><rect x="783" y="990" width="23" height="23" fill="#00e3ab" fill-opacity="0.33"/><rect x="346" y="1013" width="23" height="23" fill="#00e3ab" fill-opacity="0.3"/><rect x="369" y="1013" width="23" height="23" fill="#00e3ab" fill-opacity="0.69"/><rect x="392" y="1013" width="23" height="23" fill="#00e3ab" fill-opacity="0.97"/><rect x="415" y="1013" width="276" height="23" fill="#00e3ab"/><rect x="691" y="1013" width="23" height="23" fill="#00e3ab" fill-opacity="0.97"/><rect x="714" y="1013" width="23" height="23" fill="#00e3ab" fill-opacity="0.69"/><rect x="737" y="1013" width="23" height="23" fill="#00e3ab" fill-opacity="0.3"/><rect x="392" y="1036" width="23" height="23" fill="#00e3ab" fill-opacity="0.05"/><rect x="415" y="1036" width="23" height="23" fill="#00e3ab" fill-opacity="0.3"/><rect x="438" y="1036" width="23" height="23" fill="#00e3ab" fill-opacity="0.55"/><rect x="461" y="1036" width="23" height="23" fill="#00e3ab" fill-opacity="0.72"/><rect x="484" y="1036" width="23" height="23" fill="#00e3ab" fill-opacity="0.86"/><rect x="507" y="1036" width="23" height="23" fill="#00e3ab" fill-opacity="0.95"/><rect x="530" y="1036" width="46" height="23" fill="#00e3ab"/><rect x="576" y="1036" width="23" height="23" fill="#00e3ab" fill-opacity="0.95"/><rect x="599" y="1036" width="23" height="23" fill="#00e3ab" fill-opacity="0.86"/><rect x="622" y="1036" width="23" height="23" fill="#00e3ab" fill-opacity="0.72"/><rect x="645" y="1036" width="23" height="23" fill="#00e3ab" fill-opacity="0.55"/><rect x="668" y="1036" width="23" height="23" fill="#00e3ab" fill-opacity="0.3"/><rect x="691" y="1036" width="23" height="23" fill="#00e3ab" fill-opacity="0.05"/><path d="M23.5 0V1105M0 23.5H1105M46.5 0V1105M0 46.5H1105M69.5 0V1105M0 69.5H1105M92.5 0V1105M0 92.5H1105M115.5 0V1105M0 115.5H1105M138.5 0V1105M0 138.5H1105M161.5 0V1105M0 161.5H1105M207.5 0V1105M0 207.5H1105M230.5 0V1105M0 230.5H1105M253.5 0V1105M0 253.5H1105M276.5 0V1105M0 276.5H1105M299.5 0V1105M0 299.5H1105M322.5 0V1105M0 322.5H1105M345.5 0V1105M0 345.5H1105M391.5 0V1105M0 391.5H1105M414.5 0V1105M0 414.5H1105M437.5 0V1105M0 437.5H1105M460.5 0V1105M0 460.5H1105M483.5 0V1105M0 483.5H1105M506.5 0V1105M0 506.5H1105M529.5 0V1105M0 529.5H1105M575.5 0V1105M0 575.5H1105M598.5 0V1105M0 598.5H1105M621.5 0V1105M0 621.5H1105M644.5 0V1105M0 644.5H1105M667.5 0V1105M0 667.5H1105M690.5 0V1105M0 690.5H1105M713.5 0V1105M0 713.5H1105M759.5 0V1105M0 759.5H1105M782.5 0V1105M0 782.5H1105M805.5 0V1105M0 805.5H1105M828.5 0V1105M0 828.5H1105M851.5 0V1105M0 851.5H1105M874.5 0V1105M0 874.5H1105M897.5 0V1105M0 897.5H1105M943.5 0V1105M0 943.5H1105M966.5 0V1105M0 966.5H1105M989.5 0V1105M0 989.5H1105M1012.5 0V1105M0 1012.5H1105M1035.5 0V1105M0 1035.5H1105M1058.5 0V1105M0 1058.5H1105M1081.5 0V1105M0 1081.5H1105" stroke="#ece6e6" stroke-width="1" fill="none"/><path d="M23.5 0V1105M0 23.5H1105M46.5 0V1105M0 46.5H1105M69.5 0V1105M0 69.5H1105M92.5 0V1105M0 92.5H1105M115.5 0V1105M0 115.5H1105M138.5 0V1105M0 138.5H1105M161.5 0V1105M0 161.5H1105M207.5 0V1105M0 207.5H1105M230.5 0V1105M0 230.5H1105M253.5 0V1105M0 253.5H1105M276.5 0V1105M0 276.5H1105M299.5 0V1105M0 299.5H1105M322.5 0V1105M0 322.5H1105M345.5 0V1105M0 345.5H1105M391.5 0V1105M0 391.5H1105M414.5 0V1105M0 414.5H1105M437.5 0V1105M0 437.5H1105M460.5 0V1105M0 460.5H1105M483.5 0V1105M0 483.5H1105M506.5 0V1105M0 506.5H1105M529.5 0V1105M0 529.5H1105M575.5 0V1105M0 575.5H1105M598.5 0V1105M0 598.5H1105M621.5 0V1105M0 621.5H1105M644.5 0V1105M0 644.5H1105M667.5 0V1105M0 667.5H1105M690.5 0V1105M0 690.5H1105M713.5 0V1105M0 713.5H1105M759.5 0V1105M0 759.5H1105M782.5 0V1105M0 782.5H1105M805.5 0V1105M0 805.5H1105M828.5 0V1105M0 828.5H1105M851.5 0V1105M0 851.5H1105M874.5 0V1105M0 874.5H1105M897.5 0V1105M0 897.5H1105M943.5 0V1105M0 943.5H1105M966.5 0V1105M0 966.5H1105M989.5 0V1105M0 989.5H1105M1012.5 0V1105M0 1012.5H1105M1035.5 0V1105M0 1035.5H1105M1058.5 0V1105M0 1058.5H1105M1081.5 0V1105M0 1081.5H1105" stroke="#4d4d4d" stroke-width="1" stroke-dasharray="1 1" fill="none"/><path d="M0.5 0V1105M0 0.5H1105M184.5 0V1105M0 184.5H1105M368.5 0V1105M0 368.5H1105M552.5 0V1105M0 552.5H1105M736.5 0V1105M0 736.5H1105M920.5 0V1105M0 920.5H1105M1104.5 0V1105M0 1104.5H1105" stroke="#555" stroke-width="1" fill="none"/></svg>
</main>
<aside id="tools-panel" aria-label="Tools and colors">
<div class="a" style="left:2296px;top:203px;width:236px;height:1235px;background:#f3f3f3;"></div>
<div class="a" style="left:2297px;top:203px;width:235px;height:247px;background:#f9f9f9;"></div>
<div class="a" style="left:2296px;top:203px;width:1px;height:1235px;background:#d0d0d0;"></div>
<div class="a" style="left:2303px;top:209px;width:37px;height:34px;background:#e3e3e3;border:1px solid #a6a6a6;"></div>
<svg class="a" style="left:2309.1px;top:213.6px;" width="27" height="27" viewBox="0 0 32 32"><rect x="5.6" y="5.6" width="20.8" height="20.8" fill="#bdbdbd"/><rect x="4.75" y="4.75" width="22.5" height="22.5" fill="none" stroke="#fff" stroke-width="3.2"/><rect x="4.75" y="4.75" width="22.5" height="22.5" fill="none" stroke="#3a3a3a" stroke-width="3.2" stroke-dasharray="4.7 3.65 5.8 3.65 4.7 0"/></svg>
<svg class="a" style="left:2308.1px;top:247.5px;" width="26" height="26" viewBox="0 0 33 33"><path d="M3 30.5L30 3" stroke="#666" stroke-width="4.6"/></svg>
<svg class="a" style="left:2345.2px;top:213.0px;" width="27" height="27" viewBox="0 0 32 32"><path d="M2.5 30.5L20 13.5" stroke="#666" stroke-width="5.2" stroke-linecap="round"/><path d="M5 28L10 23" stroke="#666" stroke-width="4" stroke-linecap="round"/><path d="M15.5 8.5L25.5 18.5L28 16L26 13.5C31 10 32 4 28.5 1.5C24.5 -1 20.5 1.5 19.5 7L17.5 6Z" fill="#2980b9"/></svg>
<svg class="a" style="left:2345.2px;top:247.5px;" width="26" height="26" viewBox="0 0 33 33"><rect x="2.8" y="4.8" width="28.4" height="24.4" fill="#fdfdfd" stroke="#666" stroke-width="3.4"/></svg>
<svg class="a" style="left:2382.2px;top:247.5px;" width="26" height="26" viewBox="0 0 33 33"><rect x="1" y="3" width="31" height="27" fill="#666"/></svg>
<svg class="a" style="left:2419.3px;top:213.0px;" width="27" height="27" viewBox="0 0 32 32"><path d="M9.5 20.5L24 5.5" stroke="#2980b9" stroke-width="8.4"/><path d="M25 4.5L29 0.5" stroke="#666" stroke-width="8.4"/><path d="M2 31L7 18.5L14.5 26Z" fill="#666"/><path d="M5.8 27.5L8 21.5L11.5 25Z" fill="#f4f4f4"/></svg>
<svg class="a" style="left:2419.3px;top:247.5px;" width="26" height="26" viewBox="0 0 33 33"><ellipse cx="16.5" cy="16.5" rx="14.6" ry="12.6" fill="#fdfdfd" stroke="#666" stroke-width="3.8"/></svg>
<svg class="a" style="left:2456.3px;top:213.0px;" width="27" height="27" viewBox="0 0 32 32"><path d="M17 17L29.5 0.5H32V9L22 21.5Z" fill="#666"/><path d="M14.5 17.5C17.5 16 21.5 20 20.5 23C18 31 8 32 0 29.5C7 28 6.5 20 14.5 17.5Z" fill="#2980b9"/></svg>
<svg class="a" style="left:2456.3px;top:247.5px;" width="26" height="26" viewBox="0 0 33 33"><ellipse cx="16.5" cy="16.5" rx="16.5" ry="14.5" fill="#666"/></svg>
<svg class="a" style="left:2493.3px;top:213.0px;" width="27" height="27" viewBox="0 0 32 32"><path d="M13.5 6.5L27 19.5L13.5 31.5L0 18.5Z" fill="#666"/><path d="M11.5 0.5L15 17" stroke="#4a4a4a" stroke-width="2.4"/><circle cx="15.5" cy="17" r="3.8" fill="#fff"/><circle cx="15.5" cy="17" r="2.2" fill="#4a4a4a"/><path d="M22 11.5C27 7.5 31.5 9 32 16V31.5C29 32 28.3 28 28.3 24V17.5Z" fill="#2980b9"/></svg>
<svg class="a" style="left:2493.3px;top:247.5px;" width="26" height="26" viewBox="0 0 33 33"><rect x="1.5" y="3" width="30" height="26.5" fill="#999"/><path d="M1.5 3H31.5L27 7.5H6V25L1.5 29.5Z" fill="#f6f6f6"/><path d="M31.5 29.5H1.5L6 25H27V7.5L31.5 3Z" fill="#5a5a5a"/><rect x="2.3" y="3.8" width="28.4" height="24.9" fill="none" stroke="#666" stroke-width="1.8"/></svg>
<svg class="a" style="left:2381px;top:214.4px;" width="29.8" height="24.1" viewBox="900 110 315 255"><path d="M912 232L1025 180L1100 215L990 270Z" fill="#2f86c1"/><path d="M1025 180L1130 118L1205 160L1100 215Z" fill="#c0392b"/><path d="M912 232L990 270V358L912 320Z" fill="#2980b9"/><path d="M990 270L1100 215V300L990 358Z" fill="#2980b9"/><path d="M1100 215L1205 160V245L1100 300Z" fill="#c0392b"/><path d="M912 232L990 270L1205 160M990 270V358" fill="none" stroke="#fff" stroke-width="4" stroke-dasharray="14 4"/></svg>
<div class="a" style="left:2303px;top:281px;width:222px;height:1px;background:#d9d9d9;"></div>
<div class="a" style="left:2303px;top:287px;width:37px;height:34px;background:#e3e3e3;border:1px solid #a6a6a6;"></div>
<div class="a" style="left:2320.5px;top:303.9px;width:2.2px;height:2.2px;background:#666;"></div>
<div class="a" style="left:2356.2px;top:302.5px;width:5px;height:5px;background:#666;"></div>
<div class="a" style="left:2391.2px;top:299.5px;width:9px;height:9px;background:#666;"></div>
<div class="a" style="left:2426.8px;top:298.0px;width:12px;height:12px;background:#666;"></div>
<svg class="a" style="left:2459px;top:293px;" width="20" height="20" viewBox="0 0 20 20"><path d="M10 3.5L16.5 10L10 16.5L3.5 10Z" fill="#666"/></svg>
<svg class="a" style="left:2496px;top:293px;" width="20" height="20" viewBox="0 0 20 20"><path d="M10 1L19 10L10 19L1 10Z" fill="#666"/></svg>
<svg class="a" style="left:2313px;top:330px;" width="16" height="16" viewBox="0 0 16 16"><circle cx="8" cy="8" r="2" fill="#666"/></svg>
<svg class="a" style="left:2350px;top:330px;" width="16" height="16" viewBox="0 0 16 16"><circle cx="8" cy="8" r="3.6" fill="#666"/></svg>
<svg class="a" style="left:2387px;top:330px;" width="16" height="16" viewBox="0 0 16 16"><circle cx="8" cy="8" r="5.2" fill="#666"/></svg>
<svg class="a" style="left:2424px;top:330px;" width="16" height="16" viewBox="0 0 16 16"><circle cx="8" cy="8" r="6.8" fill="#666"/></svg>
<svg class="a" style="left:2462px;top:330px;" width="16" height="16" viewBox="0 0 16 16"><path d="M3.6 12L11.4 4.2" stroke="#666" stroke-width="3.8" stroke-linecap="round"/></svg>
<svg class="a" style="left:2499px;top:330px;" width="16" height="16" viewBox="0 0 16 16"><path d="M3.6 4.2L11.4 12" stroke="#666" stroke-width="3.8" stroke-linecap="round"/></svg>
<div class="a" style="left:2303px;top:359px;width:222px;height:1px;background:#d9d9d9;"></div>
<div class="a" style="left:2303px;top:365px;width:37px;height:34px;background:#e3e3e3;border:1px solid #a6a6a6;"></div>
<svg class="a" width="0" height="0" style="left:0;top:0"><defs><linearGradient id="g1" x1="0" x2="1"><stop offset="0" stop-color="#8ff4ee"/><stop offset="1" stop-color="#2377b8"/></linearGradient><linearGradient id="g2" x1="0" x2="0" y1="0" y2="1"><stop offset="0" stop-color="#8ff4ee"/><stop offset="1" stop-color="#2377b8"/></linearGradient><radialGradient id="g3"><stop offset="0" stop-color="#2377b8"/><stop offset="0.9" stop-color="#8ff4ee"/></radialGradient><linearGradient id="g4" x1="1" y1="0" x2="0" y2="1"><stop offset="0" stop-color="#2377b8"/><stop offset="1" stop-color="#8ff4ee"/></linearGradient><linearGradient id="g5" x1="0" x2="1"><stop offset="0" stop-color="#8ff4ee"/><stop offset="0.5" stop-color="#2377b8"/><stop offset="1" stop-color="#8ff4ee"/></linearGradient></defs></svg>
<svg class="a" style="left:2309.9px;top:371.0px" width="26" height="24.6" viewBox="0 0 26 26" preserveAspectRatio="none"><rect x="1" y="1" width="24" height="24" fill="#2980b9"/><rect x="1" y="1" width="24" height="24" fill="none" stroke="#5a5a5a" stroke-width="2"/></svg>
<svg class="a" style="left:2346.1px;top:370.1px" width="26" height="24.6" viewBox="0 0 26 26" preserveAspectRatio="none"><rect x="1" y="1" width="24" height="24" fill="url(#g1)"/><rect x="1" y="1" width="24" height="24" fill="none" stroke="#5a5a5a" stroke-width="2"/></svg>
<svg class="a" style="left:2383.1px;top:370.1px" width="26" height="24.6" viewBox="0 0 26 26" preserveAspectRatio="none"><rect x="1" y="1" width="24" height="24" fill="url(#g2)"/><rect x="1" y="1" width="24" height="24" fill="none" stroke="#5a5a5a" stroke-width="2"/></svg>
<svg class="a" style="left:2420.2px;top:370.1px" width="26" height="24.6" viewBox="0 0 26 26" preserveAspectRatio="none"><rect x="1" y="1" width="24" height="24" fill="url(#g3)"/><rect x="1" y="1" width="24" height="24" fill="none" stroke="#5a5a5a" stroke-width="2"/></svg>
<svg class="a" style="left:2457.2px;top:370.1px" width="26" height="24.6" viewBox="0 0 26 26" preserveAspectRatio="none"><rect x="1" y="1" width="24" height="24" fill="#7fe3ea"/><path d="M1 1H25V25Z" fill="#2a80bd"/><path d="M1 1V25H25Z" fill="url(#g2)"/><rect x="1" y="1" width="24" height="24" fill="none" stroke="#5a5a5a" stroke-width="2"/></svg>
<svg class="a" style="left:2494.2px;top:370.1px" width="26" height="24.6" viewBox="0 0 26 26" preserveAspectRatio="none"><rect x="1" y="1" width="24" height="24" fill="url(#g5)"/><rect x="1" y="1" width="24" height="24" fill="none" stroke="#5a5a5a" stroke-width="2"/></svg>
<div class="a" style="left:2303px;top:403px;width:222px;height:1px;background:#d9d9d9;"></div>
<svg class="a" style="left:2308.1px;top:413.0px;" width="27" height="27" viewBox="0 0 32 32"><path d="M3.5 1L31 13.5L30 15H3.5Z" fill="#999"/><path d="M3.5 19.5H30L31 21L5 32.5L3.5 31.5Z" fill="#2980b9"/></svg>
<svg class="a" style="left:2345.2px;top:413.0px;" width="27" height="27" viewBox="0 0 32 32"><path d="M13.5 3.5L14.5 4V28.5L13.5 29.5H2L1 28Z" fill="#999"/><path d="M19.5 3.5L18.5 4V28.5L19.5 29.5H31L32 28Z" fill="#2980b9"/></svg>
<svg class="a" style="left:2381.7px;top:412.5px;" width="28" height="28" viewBox="0 0 32 32"><path d="M12 26.5A12.3 12.3 0 1 1 22.5 27" fill="none" stroke="#2980b9" stroke-width="5"/><path d="M0.5 26.5C5 28 8 26 11 18C12 15.5 14 16 14.5 18.5L15.5 30.5Z" fill="#2980b9"/></svg>
<span id="t36" class="t" style="left:2421.0px;top:410.2px;font-size:34.6px;color:#666;font-weight:700;transform:scaleX(0.9806);">A</span>
<svg class="a" style="left:2455.3px;top:412.5px;" width="28" height="28" viewBox="0 0 32 32"><path d="M2 30.5C6 31.5 8.5 29 9.8 24L14 8.5C15.5 3.5 18.5 2 24.5 3" fill="none" stroke="#666" stroke-width="5.2"/><path d="M6.5 12.3H21.5" stroke="#666" stroke-width="4.4"/><path d="M30.5 32V25L23.5 32Z" fill="#666"/></svg>
<div class="a" style="left:2495px;top:415px;width:20px;height:19px;background:radial-gradient(circle at 50% 50%,rgba(255,255,255,.95) 0,rgba(255,255,255,0) 55%),conic-gradient(from 0deg,#35e04a,#f4f43a 45deg,#ff8a2a 80deg,#ff3434 120deg,#ff38d0 180deg,#6a3cff 230deg,#2a6cff 270deg,#2fe8f0 315deg,#35e04a);"></div>
<svg class="a" style="left:2493.3px;top:412.5px;" width="28" height="28" viewBox="0 0 32 32"><rect x="1.6" y="1.6" width="25.4" height="24.6" fill="none" stroke="#666" stroke-width="3.2"/><path d="M32 32V25L25 32Z" fill="#666"/></svg>
<div class="a" style="left:2297px;top:449px;width:235px;height:1px;background:#d3d3d3;"></div>
<div class="a" style="left:2305px;top:454px;width:219px;height:36px;background:#f9f9f9;"></div>
<svg class="a" style="left:2308.5px;top:458.0px;" width="27" height="27" viewBox="0 0 32 32"><path d="M1.8 31V7.8H11L14.5 11.5H14" fill="none" stroke="#e0a04e" stroke-width="3.6"/><path d="M10.5 16.4H32L26.2 31.6H0.5C3 31 3.5 30 4.2 28L8 18.5C8.6 17 9.3 16.4 10.5 16.4Z" fill="#e0a04e"/><circle cx="23.5" cy="9.5" r="10" fill="#f9f9f9"/><circle cx="23.5" cy="9.5" r="8.8" fill="#27ae60"/><path d="M19.5 5.5L26.5 12.5M27 6.5V13H20.5" stroke="#fff" stroke-width="2.6" fill="none"/></svg>
<svg class="a" style="left:2343.5px;top:458.5px;" width="26" height="26" viewBox="0 0 32 32"><g transform="translate(1.5 2) scale(1.0740740740740742)"><path d="M0 0H27V27H4L0 23Z" fill="#8e44ad"/><rect x="4.5" y="1" width="18" height="11.5" rx="1.5" fill="#fdfdfd"/><rect x="7" y="4" width="13" height="1.3" fill="#555"/><rect x="7" y="7.6" width="13" height="1.3" fill="#555"/><rect x="6" y="17" width="16.5" height="9" fill="#fdfdfd"/><rect x="9.5" y="19.8" width="3.4" height="6.2" fill="#8e44ad"/></g></svg>
<svg class="a" style="left:2379.0px;top:458.0px;" width="27" height="27" viewBox="0 0 32 32"><path d="M3.4 3.4H18.6L25 9.8V29.4H3.4Z" fill="#fdfdfd" stroke="#666" stroke-width="2.8"/><path d="M18 2V10.4H26.4Z" fill="#666"/><rect x="15" y="16" width="17" height="16" fill="#f9f9f9"/><path d="M16.5 24.5H31.5M24 17.0V32.0" stroke="#27ae60" stroke-width="4.6"/></svg>
<svg class="a" style="left:2414.5px;top:458.0px;" width="27" height="27" viewBox="0 0 32 32"><path d="M3.4 3.4H18.6L25 9.8V29.4H3.4Z" fill="#fdfdfd" stroke="#666" stroke-width="2.8"/><path d="M18 2V10.4H26.4Z" fill="#666"/><rect x="15" y="19" width="17" height="13" fill="#f9f9f9"/><rect x="16.5" y="22.3" width="15" height="4.6" fill="#c0392b"/></svg>
<svg class="a" width="0" height="0" style="left:0;top:0"><defs><linearGradient id="l1"><stop offset="0" stop-color="#5a5cf0"/><stop offset="0.5" stop-color="#f050f0"/><stop offset="1" stop-color="#f05a5a"/></linearGradient><linearGradient id="l2"><stop offset="0" stop-color="#fdfdff"/><stop offset="1" stop-color="#3a86e0"/></linearGradient><linearGradient id="l3"><stop offset="0" stop-color="#fdfdfd"/><stop offset="1" stop-color="#555"/></linearGradient></defs></svg>
<svg class="a" style="left:2449.5px;top:459.0px;" width="25" height="25" viewBox="0 0 32 32"><rect x="1.2" y="1.6" width="29.6" height="6.6" fill="url(#l1)" stroke="#5a5a5a" stroke-width="2.4"/><rect x="1.2" y="13" width="29.6" height="6.6" fill="url(#l2)" stroke="#5a5a5a" stroke-width="2.4"/><rect x="1.2" y="24.4" width="29.6" height="6.6" fill="url(#l3)" stroke="#5a5a5a" stroke-width="2.4"/></svg>
<svg class="a" style="left:2486.5px;top:460.5px;" width="21" height="21" viewBox="0 0 32 35"><rect x="0" y="1" width="32" height="5.2" rx="1" fill="#666"/><rect x="0" y="10.3" width="32" height="5.2" rx="1" fill="#666"/><rect x="0" y="19.6" width="32" height="5.2" rx="1" fill="#666"/><rect x="0" y="28.9" width="32" height="5.2" rx="1" fill="#666"/></svg>
<svg class="a" style="left:2310px;top:496px" width="210" height="210" viewBox="0 0 210 210" shape-rendering="crispEdges"><rect x="-1" y="-1" width="211" height="211" fill="#fcfcfc"/><rect x="0" y="0" width="210" height="210" fill="#3e3e3e"/><rect x="1" y="1" width="12" height="12" fill="#606060"/><rect x="2" y="2" width="10" height="10" fill="#000000"/><rect x="1" y="14" width="12" height="12" fill="#717171"/><rect x="2" y="15" width="10" height="10" fill="#1a1a1a"/><rect x="14" y="1" width="12" height="12" fill="#b06060"/><rect x="15" y="2" width="10" height="10" fill="#800000"/><rect x="14" y="14" width="12" height="12" fill="#797979"/><rect x="15" y="15" width="10" height="10" fill="#282828"/><rect x="27" y="1" width="12" height="12" fill="#60b060"/><rect x="28" y="2" width="10" height="10" fill="#008000"/><rect x="27" y="14" width="12" height="12" fill="#838383"/><rect x="28" y="15" width="10" height="10" fill="#373737"/><rect x="40" y="1" width="12" height="12" fill="#b0b060"/><rect x="41" y="2" width="10" height="10" fill="#808000"/><rect x="40" y="14" width="12" height="12" fill="#8b8b8b"/><rect x="41" y="15" width="10" height="10" fill="#454545"/><rect x="53" y="1" width="12" height="12" fill="#6060b0"/><rect x="54" y="2" width="10" height="10" fill="#000080"/><rect x="53" y="14" width="12" height="12" fill="#949494"/><rect x="54" y="15" width="10" height="10" fill="#545454"/><rect x="66" y="1" width="12" height="12" fill="#b060b0"/><rect x="67" y="2" width="10" height="10" fill="#800080"/><rect x="66" y="14" width="12" height="12" fill="#9e9e9e"/><rect x="67" y="15" width="10" height="10" fill="#636363"/><rect x="79" y="1" width="12" height="12" fill="#60b0b0"/><rect x="80" y="2" width="10" height="10" fill="#008080"/><rect x="79" y="14" width="12" height="12" fill="#a6a6a6"/><rect x="80" y="15" width="10" height="10" fill="#717171"/><rect x="92" y="1" width="12" height="12" fill="#d7d7d7"/><rect x="93" y="2" width="10" height="10" fill="#c0c0c0"/><rect x="92" y="14" width="12" height="12" fill="#b0b0b0"/><rect x="93" y="15" width="10" height="10" fill="#808080"/><rect x="105" y="1" width="12" height="12" fill="#b0b0b0"/><rect x="106" y="2" width="10" height="10" fill="#808080"/><rect x="105" y="14" width="12" height="12" fill="#b8b8b8"/><rect x="106" y="15" width="10" height="10" fill="#8e8e8e"/><rect x="118" y="1" width="12" height="12" fill="#ff6060"/><rect x="119" y="2" width="10" height="10" fill="#ff0000"/><rect x="118" y="14" width="12" height="12" fill="#c2c2c2"/><rect x="119" y="15" width="10" height="10" fill="#9d9d9d"/><rect x="131" y="1" width="13" height="12" fill="#60ff60"/><rect x="132" y="2" width="11" height="10" fill="#00ff00"/><rect x="131" y="14" width="13" height="12" fill="#cbcbcb"/><rect x="132" y="15" width="11" height="10" fill="#acacac"/><rect x="145" y="1" width="12" height="12" fill="#ffff60"/><rect x="146" y="2" width="10" height="10" fill="#ffff00"/><rect x="145" y="14" width="12" height="12" fill="#d4d4d4"/><rect x="146" y="15" width="10" height="10" fill="#bababa"/><rect x="158" y="1" width="12" height="12" fill="#6060ff"/><rect x="159" y="2" width="10" height="10" fill="#0000ff"/><rect x="158" y="14" width="12" height="12" fill="#dddddd"/><rect x="159" y="15" width="10" height="10" fill="#c9c9c9"/><rect x="171" y="1" width="12" height="12" fill="#ff60ff"/><rect x="172" y="2" width="10" height="10" fill="#ff00ff"/><rect x="171" y="14" width="12" height="12" fill="#e6e6e6"/><rect x="172" y="15" width="10" height="10" fill="#d7d7d7"/><rect x="184" y="1" width="12" height="12" fill="#60ffff"/><rect x="185" y="2" width="10" height="10" fill="#00ffff"/><rect x="184" y="14" width="12" height="12" fill="#efefef"/><rect x="185" y="15" width="10" height="10" fill="#e6e6e6"/><rect x="197" y="1" width="12" height="12" fill="#ffffff"/><rect x="198" y="2" width="10" height="10" fill="#ffffff"/><rect x="197" y="14" width="12" height="12" fill="#f8f8f8"/><rect x="198" y="15" width="10" height="10" fill="#f5f5f5"/><rect x="1" y="27" width="12" height="12" fill="#836060"/><rect x="2" y="28" width="10" height="10" fill="#380000"/><rect x="14" y="27" width="12" height="12" fill="#956060"/><rect x="15" y="28" width="10" height="10" fill="#550000"/><rect x="27" y="27" width="12" height="12" fill="#a66060"/><rect x="28" y="28" width="10" height="10" fill="#710000"/><rect x="40" y="27" width="12" height="12" fill="#b86060"/><rect x="41" y="28" width="10" height="10" fill="#8d0000"/><rect x="53" y="27" width="12" height="12" fill="#ca6060"/><rect x="54" y="28" width="10" height="10" fill="#aa0000"/><rect x="66" y="27" width="12" height="12" fill="#db6060"/><rect x="67" y="28" width="10" height="10" fill="#c60000"/><rect x="79" y="27" width="12" height="12" fill="#ed6060"/><rect x="80" y="28" width="10" height="10" fill="#e30000"/><rect x="92" y="27" width="12" height="12" fill="#ff6060"/><rect x="93" y="28" width="10" height="10" fill="#ff0000"/><rect x="105" y="27" width="12" height="12" fill="#ff7272"/><rect x="106" y="28" width="10" height="10" fill="#ff1c1c"/><rect x="118" y="27" width="12" height="12" fill="#ff8484"/><rect x="119" y="28" width="10" height="10" fill="#ff3939"/><rect x="131" y="27" width="13" height="12" fill="#ff9595"/><rect x="132" y="28" width="11" height="10" fill="#ff5555"/><rect x="145" y="27" width="12" height="12" fill="#ffa6a6"/><rect x="146" y="28" width="10" height="10" fill="#ff7171"/><rect x="158" y="27" width="12" height="12" fill="#ffb8b8"/><rect x="159" y="28" width="10" height="10" fill="#ff8e8e"/><rect x="171" y="27" width="12" height="12" fill="#ffcaca"/><rect x="172" y="28" width="10" height="10" fill="#ffaaaa"/><rect x="184" y="27" width="12" height="12" fill="#ffdbdb"/><rect x="185" y="28" width="10" height="10" fill="#ffc6c6"/><rect x="197" y="27" width="12" height="12" fill="#ffeded"/><rect x="198" y="28" width="10" height="10" fill="#ffe3e3"/><rect x="1" y="40" width="12" height="12" fill="#836d60"/><rect x="2" y="41" width="10" height="10" fill="#381500"/><rect x="14" y="40" width="12" height="12" fill="#957460"/><rect x="15" y="41" width="10" height="10" fill="#551f00"/><rect x="27" y="40" width="12" height="12" fill="#a67a60"/><rect x="28" y="41" width="10" height="10" fill="#712900"/><rect x="40" y="40" width="12" height="12" fill="#b88160"/><rect x="41" y="41" width="10" height="10" fill="#8d3400"/><rect x="53" y="40" width="12" height="12" fill="#ca8760"/><rect x="54" y="41" width="10" height="10" fill="#aa3e00"/><rect x="66" y="40" width="12" height="12" fill="#db8e60"/><rect x="67" y="41" width="10" height="10" fill="#c64900"/><rect x="79" y="40" width="12" height="12" fill="#ed9460"/><rect x="80" y="41" width="10" height="10" fill="#e35300"/><rect x="92" y="40" width="12" height="12" fill="#ff9b60"/><rect x="93" y="41" width="10" height="10" fill="#ff5e00"/><rect x="105" y="40" width="12" height="12" fill="#ffa572"/><rect x="106" y="41" width="10" height="10" fill="#ff6f1c"/><rect x="118" y="40" width="12" height="12" fill="#ffb084"/><rect x="119" y="41" width="10" height="10" fill="#ff8139"/><rect x="131" y="40" width="13" height="12" fill="#ffbc95"/><rect x="132" y="41" width="11" height="10" fill="#ff9355"/><rect x="145" y="40" width="12" height="12" fill="#ffc7a6"/><rect x="146" y="41" width="10" height="10" fill="#ffa571"/><rect x="158" y="40" width="12" height="12" fill="#ffd2b8"/><rect x="159" y="41" width="10" height="10" fill="#ffb78e"/><rect x="171" y="40" width="12" height="12" fill="#ffddca"/><rect x="172" y="41" width="10" height="10" fill="#ffc9aa"/><rect x="184" y="40" width="12" height="12" fill="#ffe8db"/><rect x="185" y="41" width="10" height="10" fill="#ffdbc6"/><rect x="197" y="40" width="12" height="12" fill="#fff3ed"/><rect x="198" y="41" width="10" height="10" fill="#ffede3"/><rect x="1" y="53" width="12" height="12" fill="#837960"/><rect x="2" y="54" width="10" height="10" fill="#382700"/><rect x="14" y="53" width="12" height="12" fill="#958560"/><rect x="15" y="54" width="10" height="10" fill="#553b00"/><rect x="27" y="53" width="12" height="12" fill="#a69160"/><rect x="28" y="54" width="10" height="10" fill="#714f00"/><rect x="40" y="53" width="12" height="12" fill="#b89e60"/><rect x="41" y="54" width="10" height="10" fill="#8d6300"/><rect x="53" y="53" width="12" height="12" fill="#caaa60"/><rect x="54" y="54" width="10" height="10" fill="#aa7700"/><rect x="66" y="53" width="12" height="12" fill="#dbb760"/><rect x="67" y="54" width="10" height="10" fill="#c68b00"/><rect x="79" y="53" width="12" height="12" fill="#edc360"/><rect x="80" y="54" width="10" height="10" fill="#e39f00"/><rect x="92" y="53" width="12" height="12" fill="#ffcf60"/><rect x="93" y="54" width="10" height="10" fill="#ffb200"/><rect x="105" y="53" width="12" height="12" fill="#ffd472"/><rect x="106" y="54" width="10" height="10" fill="#ffbb1c"/><rect x="118" y="53" width="12" height="12" fill="#ffd984"/><rect x="119" y="54" width="10" height="10" fill="#ffc339"/><rect x="131" y="53" width="13" height="12" fill="#ffdf95"/><rect x="132" y="54" width="11" height="10" fill="#ffcc55"/><rect x="145" y="53" width="12" height="12" fill="#ffe4a6"/><rect x="146" y="54" width="10" height="10" fill="#ffd471"/><rect x="158" y="53" width="12" height="12" fill="#ffe9b8"/><rect x="159" y="54" width="10" height="10" fill="#ffdd8e"/><rect x="171" y="53" width="12" height="12" fill="#ffefca"/><rect x="172" y="54" width="10" height="10" fill="#ffe6aa"/><rect x="184" y="53" width="12" height="12" fill="#fff4db"/><rect x="185" y="54" width="10" height="10" fill="#ffeec6"/><rect x="197" y="53" width="12" height="12" fill="#fff9ed"/><rect x="198" y="54" width="10" height="10" fill="#fff6e3"/><rect x="1" y="66" width="12" height="12" fill="#828360"/><rect x="2" y="67" width="10" height="10" fill="#363800"/><rect x="14" y="66" width="12" height="12" fill="#939560"/><rect x="15" y="67" width="10" height="10" fill="#525500"/><rect x="27" y="66" width="12" height="12" fill="#a4a660"/><rect x="28" y="67" width="10" height="10" fill="#6d7100"/><rect x="40" y="66" width="12" height="12" fill="#b5b860"/><rect x="41" y="67" width="10" height="10" fill="#898d00"/><rect x="53" y="66" width="12" height="12" fill="#c6ca60"/><rect x="54" y="67" width="10" height="10" fill="#a4aa00"/><rect x="66" y="66" width="12" height="12" fill="#d7db60"/><rect x="67" y="67" width="10" height="10" fill="#c0c600"/><rect x="79" y="66" width="12" height="12" fill="#e8ed60"/><rect x="80" y="67" width="10" height="10" fill="#dbe300"/><rect x="92" y="66" width="12" height="12" fill="#faff60"/><rect x="93" y="67" width="10" height="10" fill="#f7ff00"/><rect x="105" y="66" width="12" height="12" fill="#faff72"/><rect x="106" y="67" width="10" height="10" fill="#f7ff1c"/><rect x="118" y="66" width="12" height="12" fill="#faff84"/><rect x="119" y="67" width="10" height="10" fill="#f8ff39"/><rect x="131" y="66" width="13" height="12" fill="#fbff95"/><rect x="132" y="67" width="11" height="10" fill="#f9ff55"/><rect x="145" y="66" width="12" height="12" fill="#fbffa6"/><rect x="146" y="67" width="10" height="10" fill="#faff71"/><rect x="158" y="66" width="12" height="12" fill="#fcffb8"/><rect x="159" y="67" width="10" height="10" fill="#fbff8e"/><rect x="171" y="66" width="12" height="12" fill="#fdffca"/><rect x="172" y="67" width="10" height="10" fill="#fcffaa"/><rect x="184" y="66" width="12" height="12" fill="#fdffdb"/><rect x="185" y="67" width="10" height="10" fill="#fdffc6"/><rect x="197" y="66" width="12" height="12" fill="#feffed"/><rect x="198" y="67" width="10" height="10" fill="#feffe3"/><rect x="1" y="79" width="12" height="12" fill="#738360"/><rect x="2" y="80" width="10" height="10" fill="#1e3800"/><rect x="14" y="79" width="12" height="12" fill="#7c9560"/><rect x="15" y="80" width="10" height="10" fill="#2d5500"/><rect x="27" y="79" width="12" height="12" fill="#86a660"/><rect x="28" y="80" width="10" height="10" fill="#3c7100"/><rect x="40" y="79" width="12" height="12" fill="#8fb860"/><rect x="41" y="80" width="10" height="10" fill="#4b8d00"/><rect x="53" y="79" width="12" height="12" fill="#99ca60"/><rect x="54" y="80" width="10" height="10" fill="#5baa00"/><rect x="66" y="79" width="12" height="12" fill="#a2db60"/><rect x="67" y="80" width="10" height="10" fill="#6ac600"/><rect x="79" y="79" width="12" height="12" fill="#abed60"/><rect x="80" y="80" width="10" height="10" fill="#79e300"/><rect x="92" y="79" width="12" height="12" fill="#b5ff60"/><rect x="93" y="80" width="10" height="10" fill="#88ff00"/><rect x="105" y="79" width="12" height="12" fill="#bdff72"/><rect x="106" y="80" width="10" height="10" fill="#95ff1c"/><rect x="118" y="79" width="12" height="12" fill="#c5ff84"/><rect x="119" y="80" width="10" height="10" fill="#a2ff39"/><rect x="131" y="79" width="13" height="12" fill="#ceff95"/><rect x="132" y="80" width="11" height="10" fill="#b0ff55"/><rect x="145" y="79" width="12" height="12" fill="#d6ffa6"/><rect x="146" y="80" width="10" height="10" fill="#bdff71"/><rect x="158" y="79" width="12" height="12" fill="#deffb8"/><rect x="159" y="80" width="10" height="10" fill="#caff8e"/><rect x="171" y="79" width="12" height="12" fill="#e6ffca"/><rect x="172" y="80" width="10" height="10" fill="#d7ffaa"/><rect x="184" y="79" width="12" height="12" fill="#eeffdb"/><rect x="185" y="80" width="10" height="10" fill="#e5ffc6"/><rect x="197" y="79" width="12" height="12" fill="#f6ffed"/><rect x="198" y="80" width="10" height="10" fill="#f2ffe3"/><rect x="1" y="92" width="12" height="12" fill="#658360"/><rect x="2" y="93" width="10" height="10" fill="#073800"/><rect x="14" y="92" width="12" height="12" fill="#679560"/><rect x="15" y="93" width="10" height="10" fill="#0b5500"/><rect x="27" y="92" width="12" height="12" fill="#6aa660"/><rect x="28" y="93" width="10" height="10" fill="#0f7100"/><rect x="40" y="92" width="12" height="12" fill="#6cb860"/><rect x="41" y="93" width="10" height="10" fill="#138d00"/><rect x="53" y="92" width="12" height="12" fill="#6fca60"/><rect x="54" y="93" width="10" height="10" fill="#17aa00"/><rect x="66" y="92" width="12" height="12" fill="#71db60"/><rect x="67" y="93" width="10" height="10" fill="#1ac600"/><rect x="79" y="92" width="12" height="12" fill="#73ed60"/><rect x="80" y="93" width="10" height="10" fill="#1ee300"/><rect x="92" y="92" width="12" height="12" fill="#75ff60"/><rect x="93" y="93" width="10" height="10" fill="#22ff00"/><rect x="105" y="92" width="12" height="12" fill="#85ff72"/><rect x="106" y="93" width="10" height="10" fill="#3bff1c"/><rect x="118" y="92" width="12" height="12" fill="#94ff84"/><rect x="119" y="93" width="10" height="10" fill="#53ff39"/><rect x="131" y="92" width="13" height="12" fill="#a3ff95"/><rect x="132" y="93" width="11" height="10" fill="#6cff55"/><rect x="145" y="92" width="12" height="12" fill="#b2ffa6"/><rect x="146" y="93" width="10" height="10" fill="#84ff71"/><rect x="158" y="92" width="12" height="12" fill="#c2ffb8"/><rect x="159" y="93" width="10" height="10" fill="#9dff8e"/><rect x="171" y="92" width="12" height="12" fill="#d1ffca"/><rect x="172" y="93" width="10" height="10" fill="#b5ffaa"/><rect x="184" y="92" width="12" height="12" fill="#e0ffdb"/><rect x="185" y="93" width="10" height="10" fill="#ceffc6"/><rect x="197" y="92" width="12" height="12" fill="#efffed"/><rect x="198" y="93" width="10" height="10" fill="#e6ffe3"/><rect x="1" y="105" width="12" height="12" fill="#608367"/><rect x="2" y="106" width="10" height="10" fill="#00380b"/><rect x="14" y="105" width="12" height="12" fill="#60956b"/><rect x="15" y="106" width="10" height="10" fill="#005511"/><rect x="27" y="105" width="12" height="12" fill="#60a66f"/><rect x="28" y="106" width="10" height="10" fill="#007117"/><rect x="40" y="105" width="12" height="12" fill="#60b872"/><rect x="41" y="106" width="10" height="10" fill="#008d1c"/><rect x="53" y="105" width="12" height="12" fill="#60ca75"/><rect x="54" y="106" width="10" height="10" fill="#00aa22"/><rect x="66" y="105" width="12" height="12" fill="#60db79"/><rect x="67" y="106" width="10" height="10" fill="#00c628"/><rect x="79" y="105" width="12" height="12" fill="#60ed7c"/><rect x="80" y="106" width="10" height="10" fill="#00e32d"/><rect x="92" y="105" width="12" height="12" fill="#60ff80"/><rect x="93" y="106" width="10" height="10" fill="#00ff33"/><rect x="105" y="105" width="12" height="12" fill="#72ff8e"/><rect x="106" y="106" width="10" height="10" fill="#1cff4a"/><rect x="118" y="105" width="12" height="12" fill="#84ff9c"/><rect x="119" y="106" width="10" height="10" fill="#39ff60"/><rect x="131" y="105" width="13" height="12" fill="#95ffaa"/><rect x="132" y="106" width="11" height="10" fill="#55ff77"/><rect x="145" y="105" width="12" height="12" fill="#a6ffb8"/><rect x="146" y="106" width="10" height="10" fill="#71ff8e"/><rect x="158" y="105" width="12" height="12" fill="#b8ffc6"/><rect x="159" y="106" width="10" height="10" fill="#8effa4"/><rect x="171" y="105" width="12" height="12" fill="#caffd4"/><rect x="172" y="106" width="10" height="10" fill="#aaffbb"/><rect x="184" y="105" width="12" height="12" fill="#dbffe3"/><rect x="185" y="106" width="10" height="10" fill="#c6ffd2"/><rect x="197" y="105" width="12" height="12" fill="#edfff0"/><rect x="198" y="106" width="10" height="10" fill="#e3ffe8"/><rect x="1" y="118" width="12" height="12" fill="#608373"/><rect x="2" y="119" width="10" height="10" fill="#00381e"/><rect x="14" y="118" width="12" height="12" fill="#60957c"/><rect x="15" y="119" width="10" height="10" fill="#00552d"/><rect x="27" y="118" width="12" height="12" fill="#60a686"/><rect x="28" y="119" width="10" height="10" fill="#00713c"/><rect x="40" y="118" width="12" height="12" fill="#60b88f"/><rect x="41" y="119" width="10" height="10" fill="#008d4b"/><rect x="53" y="118" width="12" height="12" fill="#60ca99"/><rect x="54" y="119" width="10" height="10" fill="#00aa5b"/><rect x="66" y="118" width="12" height="12" fill="#60dba2"/><rect x="67" y="119" width="10" height="10" fill="#00c66a"/><rect x="79" y="118" width="12" height="12" fill="#60edab"/><rect x="80" y="119" width="10" height="10" fill="#00e379"/><rect x="92" y="118" width="12" height="12" fill="#60ffb5"/><rect x="93" y="119" width="10" height="10" fill="#00ff88"/><rect x="105" y="118" width="12" height="12" fill="#72ffbd"/><rect x="106" y="119" width="10" height="10" fill="#1cff95"/><rect x="118" y="118" width="12" height="12" fill="#84ffc5"/><rect x="119" y="119" width="10" height="10" fill="#39ffa2"/><rect x="131" y="118" width="13" height="12" fill="#95ffce"/><rect x="132" y="119" width="11" height="10" fill="#55ffb0"/><rect x="145" y="118" width="12" height="12" fill="#a6ffd6"/><rect x="146" y="119" width="10" height="10" fill="#71ffbd"/><rect x="158" y="118" width="12" height="12" fill="#b8ffde"/><rect x="159" y="119" width="10" height="10" fill="#8effca"/><rect x="171" y="118" width="12" height="12" fill="#caffe6"/><rect x="172" y="119" width="10" height="10" fill="#aaffd7"/><rect x="184" y="118" width="12" height="12" fill="#dbffee"/><rect x="185" y="119" width="10" height="10" fill="#c6ffe5"/><rect x="197" y="118" width="12" height="12" fill="#edfff6"/><rect x="198" y="119" width="10" height="10" fill="#e3fff2"/><rect x="1" y="131" width="12" height="13" fill="#608383"/><rect x="2" y="132" width="10" height="11" fill="#003838"/><rect x="14" y="131" width="12" height="13" fill="#609595"/><rect x="15" y="132" width="10" height="11" fill="#005555"/><rect x="27" y="131" width="12" height="13" fill="#60a6a6"/><rect x="28" y="132" width="10" height="11" fill="#007171"/><rect x="40" y="131" width="12" height="13" fill="#60b8b8"/><rect x="41" y="132" width="10" height="11" fill="#008d8d"/><rect x="53" y="131" width="12" height="13" fill="#60caca"/><rect x="54" y="132" width="10" height="11" fill="#00aaaa"/><rect x="66" y="131" width="12" height="13" fill="#60dbdb"/><rect x="67" y="132" width="10" height="11" fill="#00c6c6"/><rect x="79" y="131" width="12" height="13" fill="#60eded"/><rect x="80" y="132" width="10" height="11" fill="#00e3e3"/><rect x="92" y="131" width="12" height="13" fill="#60ffff"/><rect x="93" y="132" width="10" height="11" fill="#00ffff"/><rect x="105" y="131" width="12" height="13" fill="#72ffff"/><rect x="106" y="132" width="10" height="11" fill="#1cffff"/><rect x="118" y="131" width="12" height="13" fill="#84ffff"/><rect x="119" y="132" width="10" height="11" fill="#39ffff"/><rect x="131" y="131" width="13" height="13" fill="#95ffff"/><rect x="132" y="132" width="11" height="11" fill="#55ffff"/><rect x="145" y="131" width="12" height="13" fill="#a6ffff"/><rect x="146" y="132" width="10" height="11" fill="#71ffff"/><rect x="158" y="131" width="12" height="13" fill="#b8ffff"/><rect x="159" y="132" width="10" height="11" fill="#8effff"/><rect x="171" y="131" width="12" height="13" fill="#caffff"/><rect x="172" y="132" width="10" height="11" fill="#aaffff"/><rect x="184" y="131" width="12" height="13" fill="#dbffff"/><rect x="185" y="132" width="10" height="11" fill="#c6ffff"/><rect x="197" y="131" width="12" height="13" fill="#edffff"/><rect x="198" y="132" width="10" height="11" fill="#e3ffff"/><rect x="1" y="145" width="12" height="12" fill="#607583"/><rect x="2" y="146" width="10" height="10" fill="#002138"/><rect x="14" y="145" width="12" height="12" fill="#607f95"/><rect x="15" y="146" width="10" height="10" fill="#003155"/><rect x="27" y="145" width="12" height="12" fill="#6089a6"/><rect x="28" y="146" width="10" height="10" fill="#004271"/><rect x="40" y="145" width="12" height="12" fill="#6093b8"/><rect x="41" y="146" width="10" height="10" fill="#00528d"/><rect x="53" y="145" width="12" height="12" fill="#609eca"/><rect x="54" y="146" width="10" height="10" fill="#0063aa"/><rect x="66" y="145" width="12" height="12" fill="#60a8db"/><rect x="67" y="146" width="10" height="10" fill="#0074c6"/><rect x="79" y="145" width="12" height="12" fill="#60b2ed"/><rect x="80" y="146" width="10" height="10" fill="#0084e3"/><rect x="92" y="145" width="12" height="12" fill="#60bdff"/><rect x="93" y="146" width="10" height="10" fill="#0095ff"/><rect x="105" y="145" width="12" height="12" fill="#72c4ff"/><rect x="106" y="146" width="10" height="10" fill="#1ca1ff"/><rect x="118" y="145" width="12" height="12" fill="#84cbff"/><rect x="119" y="146" width="10" height="10" fill="#39acff"/><rect x="131" y="145" width="13" height="12" fill="#95d2ff"/><rect x="132" y="146" width="11" height="10" fill="#55b8ff"/><rect x="145" y="145" width="12" height="12" fill="#a6daff"/><rect x="146" y="146" width="10" height="10" fill="#71c4ff"/><rect x="158" y="145" width="12" height="12" fill="#b8e1ff"/><rect x="159" y="146" width="10" height="10" fill="#8ed0ff"/><rect x="171" y="145" width="12" height="12" fill="#cae9ff"/><rect x="172" y="146" width="10" height="10" fill="#aadcff"/><rect x="184" y="145" width="12" height="12" fill="#dbf0ff"/><rect x="185" y="146" width="10" height="10" fill="#c6e7ff"/><rect x="197" y="145" width="12" height="12" fill="#edf7ff"/><rect x="198" y="146" width="10" height="10" fill="#e3f3ff"/><rect x="1" y="158" width="12" height="12" fill="#606983"/><rect x="2" y="159" width="10" height="10" fill="#000e38"/><rect x="14" y="158" width="12" height="12" fill="#606d95"/><rect x="15" y="159" width="10" height="10" fill="#001555"/><rect x="27" y="158" width="12" height="12" fill="#6072a6"/><rect x="28" y="159" width="10" height="10" fill="#001c71"/><rect x="40" y="158" width="12" height="12" fill="#6076b8"/><rect x="41" y="159" width="10" height="10" fill="#00238d"/><rect x="53" y="158" width="12" height="12" fill="#607aca"/><rect x="54" y="159" width="10" height="10" fill="#002aaa"/><rect x="66" y="158" width="12" height="12" fill="#607fdb"/><rect x="67" y="159" width="10" height="10" fill="#0032c6"/><rect x="79" y="158" width="12" height="12" fill="#6084ed"/><rect x="80" y="159" width="10" height="10" fill="#0039e3"/><rect x="92" y="158" width="12" height="12" fill="#6088ff"/><rect x="93" y="159" width="10" height="10" fill="#0040ff"/><rect x="105" y="158" width="12" height="12" fill="#7295ff"/><rect x="106" y="159" width="10" height="10" fill="#1c55ff"/><rect x="118" y="158" width="12" height="12" fill="#84a2ff"/><rect x="119" y="159" width="10" height="10" fill="#396aff"/><rect x="131" y="158" width="13" height="12" fill="#95b0ff"/><rect x="132" y="159" width="11" height="10" fill="#5580ff"/><rect x="145" y="158" width="12" height="12" fill="#a6bdff"/><rect x="146" y="159" width="10" height="10" fill="#7195ff"/><rect x="158" y="158" width="12" height="12" fill="#b8caff"/><rect x="159" y="159" width="10" height="10" fill="#8eaaff"/><rect x="171" y="158" width="12" height="12" fill="#cad7ff"/><rect x="172" y="159" width="10" height="10" fill="#aabfff"/><rect x="184" y="158" width="12" height="12" fill="#dbe4ff"/><rect x="185" y="159" width="10" height="10" fill="#c6d4ff"/><rect x="197" y="158" width="12" height="12" fill="#edf1ff"/><rect x="198" y="159" width="10" height="10" fill="#e3eaff"/><rect x="1" y="171" width="12" height="12" fill="#666083"/><rect x="2" y="172" width="10" height="10" fill="#090038"/><rect x="14" y="171" width="12" height="12" fill="#696095"/><rect x="15" y="172" width="10" height="10" fill="#0e0055"/><rect x="27" y="171" width="12" height="12" fill="#6c60a6"/><rect x="28" y="172" width="10" height="10" fill="#130071"/><rect x="40" y="171" width="12" height="12" fill="#6f60b8"/><rect x="41" y="172" width="10" height="10" fill="#18008d"/><rect x="53" y="171" width="12" height="12" fill="#7260ca"/><rect x="54" y="172" width="10" height="10" fill="#1c00aa"/><rect x="66" y="171" width="12" height="12" fill="#7560db"/><rect x="67" y="172" width="10" height="10" fill="#2100c6"/><rect x="79" y="171" width="12" height="12" fill="#7860ed"/><rect x="80" y="172" width="10" height="10" fill="#2600e3"/><rect x="92" y="171" width="12" height="12" fill="#7a60ff"/><rect x="93" y="172" width="10" height="10" fill="#2a00ff"/><rect x="105" y="171" width="12" height="12" fill="#8972ff"/><rect x="106" y="172" width="10" height="10" fill="#421cff"/><rect x="118" y="171" width="12" height="12" fill="#9884ff"/><rect x="119" y="172" width="10" height="10" fill="#5a39ff"/><rect x="131" y="171" width="13" height="12" fill="#a695ff"/><rect x="132" y="172" width="11" height="10" fill="#7155ff"/><rect x="145" y="171" width="12" height="12" fill="#b5a6ff"/><rect x="146" y="172" width="10" height="10" fill="#8971ff"/><rect x="158" y="171" width="12" height="12" fill="#c4b8ff"/><rect x="159" y="172" width="10" height="10" fill="#a18eff"/><rect x="171" y="171" width="12" height="12" fill="#d2caff"/><rect x="172" y="172" width="10" height="10" fill="#b8aaff"/><rect x="184" y="171" width="12" height="12" fill="#e1dbff"/><rect x="185" y="172" width="10" height="10" fill="#d0c6ff"/><rect x="197" y="171" width="12" height="12" fill="#f0edff"/><rect x="198" y="172" width="10" height="10" fill="#e7e3ff"/><rect x="1" y="184" width="12" height="12" fill="#756083"/><rect x="2" y="185" width="10" height="10" fill="#210038"/><rect x="14" y="184" width="12" height="12" fill="#7f6095"/><rect x="15" y="185" width="10" height="10" fill="#310055"/><rect x="27" y="184" width="12" height="12" fill="#8960a6"/><rect x="28" y="185" width="10" height="10" fill="#420071"/><rect x="40" y="184" width="12" height="12" fill="#9360b8"/><rect x="41" y="185" width="10" height="10" fill="#52008d"/><rect x="53" y="184" width="12" height="12" fill="#9e60ca"/><rect x="54" y="185" width="10" height="10" fill="#6300aa"/><rect x="66" y="184" width="12" height="12" fill="#a860db"/><rect x="67" y="185" width="10" height="10" fill="#7400c6"/><rect x="79" y="184" width="12" height="12" fill="#b260ed"/><rect x="80" y="185" width="10" height="10" fill="#8400e3"/><rect x="92" y="184" width="12" height="12" fill="#bd60ff"/><rect x="93" y="185" width="10" height="10" fill="#9500ff"/><rect x="105" y="184" width="12" height="12" fill="#c472ff"/><rect x="106" y="185" width="10" height="10" fill="#a11cff"/><rect x="118" y="184" width="12" height="12" fill="#cb84ff"/><rect x="119" y="185" width="10" height="10" fill="#ac39ff"/><rect x="131" y="184" width="13" height="12" fill="#d295ff"/><rect x="132" y="185" width="11" height="10" fill="#b855ff"/><rect x="145" y="184" width="12" height="12" fill="#daa6ff"/><rect x="146" y="185" width="10" height="10" fill="#c471ff"/><rect x="158" y="184" width="12" height="12" fill="#e1b8ff"/><rect x="159" y="185" width="10" height="10" fill="#d08eff"/><rect x="171" y="184" width="12" height="12" fill="#e9caff"/><rect x="172" y="185" width="10" height="10" fill="#dcaaff"/><rect x="184" y="184" width="12" height="12" fill="#f0dbff"/><rect x="185" y="185" width="10" height="10" fill="#e7c6ff"/><rect x="197" y="184" width="12" height="12" fill="#f7edff"/><rect x="198" y="185" width="10" height="10" fill="#f3e3ff"/><rect x="1" y="197" width="12" height="12" fill="#836083"/><rect x="2" y="198" width="10" height="10" fill="#380038"/><rect x="14" y="197" width="12" height="12" fill="#956095"/><rect x="15" y="198" width="10" height="10" fill="#550055"/><rect x="27" y="197" width="12" height="12" fill="#a660a6"/><rect x="28" y="198" width="10" height="10" fill="#710071"/><rect x="40" y="197" width="12" height="12" fill="#b860b8"/><rect x="41" y="198" width="10" height="10" fill="#8d008d"/><rect x="53" y="197" width="12" height="12" fill="#ca60ca"/><rect x="54" y="198" width="10" height="10" fill="#aa00aa"/><rect x="66" y="197" width="12" height="12" fill="#db60db"/><rect x="67" y="198" width="10" height="10" fill="#c600c6"/><rect x="79" y="197" width="12" height="12" fill="#ed60ed"/><rect x="80" y="198" width="10" height="10" fill="#e300e3"/><rect x="92" y="197" width="12" height="12" fill="#ff60ff"/><rect x="93" y="198" width="10" height="10" fill="#ff00ff"/><rect x="105" y="197" width="12" height="12" fill="#ff72ff"/><rect x="106" y="198" width="10" height="10" fill="#ff1cff"/><rect x="118" y="197" width="12" height="12" fill="#ff84ff"/><rect x="119" y="198" width="10" height="10" fill="#ff39ff"/><rect x="131" y="197" width="13" height="12" fill="#ff95ff"/><rect x="132" y="198" width="11" height="10" fill="#ff55ff"/><rect x="145" y="197" width="12" height="12" fill="#ffa6ff"/><rect x="146" y="198" width="10" height="10" fill="#ff71ff"/><rect x="158" y="197" width="12" height="12" fill="#ffb8ff"/><rect x="159" y="198" width="10" height="10" fill="#ff8eff"/><rect x="171" y="197" width="12" height="12" fill="#ffcaff"/><rect x="172" y="198" width="10" height="10" fill="#ffaaff"/><rect x="184" y="197" width="12" height="12" fill="#ffdbff"/><rect x="185" y="198" width="10" height="10" fill="#ffc6ff"/><rect x="197" y="197" width="12" height="12" fill="#ffedff"/><rect x="198" y="198" width="10" height="10" fill="#ffe3ff"/></svg>
<span id="t37" class="t" style="left:2312.0px;top:714.6px;font-size:18px;color:#1f1f1f;transform:scaleX(0.9155);">A</span>
<div class="a" style="left:2331px;top:719px;width:153px;height:8px;background:#c9c9cd;border-radius:4px;"></div>
<div class="a" style="left:2470px;top:714px;width:18px;height:18px;background:#868694;border-radius:9px;"></div>
<div class="a" style="left:2493px;top:713px;width:32px;height:18px;background:#fff;border:1px solid #b5b5b5;"></div>
<span id="t38" class="t" style="left:2499.5px;top:717.3px;font-size:12.5px;color:#1f1f1f;transform:scaleX(0.9109);">255</span>
<span id="t39" class="t" style="left:2312.5px;top:740.4px;font-size:18px;color:#1f1f1f;transform:scaleX(0.8462);">R</span>
<div class="a" style="left:2335px;top:745px;width:148px;height:8px;background:#c9c9cd;border-radius:4px;"></div>
<div class="a" style="left:2326px;top:740px;width:18px;height:18px;background:#868694;border-radius:9px;"></div>
<div class="a" style="left:2493px;top:739px;width:32px;height:18px;background:#fff;border:1px solid #b5b5b5;"></div>
<span id="t40" class="t" style="left:2505.8px;top:743.1px;font-size:12.5px;color:#1f1f1f;transform:scaleX(0.9348);">0</span>
<span id="t41" class="t" style="left:2311.5px;top:765.5px;font-size:18px;color:#1f1f1f;transform:scaleX(0.8919);">G</span>
<div class="a" style="left:2335px;top:770px;width:148px;height:8px;background:#c9c9cd;border-radius:4px;"></div>
<div class="a" style="left:2326px;top:765px;width:18px;height:18px;background:#868694;border-radius:9px;"></div>
<div class="a" style="left:2493px;top:764px;width:32px;height:18px;background:#fff;border:1px solid #b5b5b5;"></div>
<span id="t42" class="t" style="left:2505.8px;top:768.2px;font-size:12.5px;color:#1f1f1f;transform:scaleX(0.9348);">0</span>
<span id="t43" class="t" style="left:2313.0px;top:790.6px;font-size:18px;color:#1f1f1f;transform:scaleX(0.8322);">B</span>
<div class="a" style="left:2335px;top:795px;width:148px;height:8px;background:#c9c9cd;border-radius:4px;"></div>
<div class="a" style="left:2326px;top:790px;width:18px;height:18px;background:#868694;border-radius:9px;"></div>
<div class="a" style="left:2493px;top:789px;width:32px;height:18px;background:#fff;border:1px solid #b5b5b5;"></div>
<span id="t44" class="t" style="left:2505.8px;top:793.3px;font-size:12.5px;color:#1f1f1f;transform:scaleX(0.9348);">0</span>
<svg class="a" style="left:2338px;top:842px;" width="48" height="44" viewBox="0 0 48 44"><defs><pattern id="chk2" width="10" height="10" patternUnits="userSpaceOnUse"><rect width="10" height="10" fill="#fff"/><rect width="5" height="5" fill="#eee"/><rect x="5" y="5" width="5" height="5" fill="#eee"/></pattern></defs><rect x="0.5" y="0.5" width="47" height="43" fill="url(#chk2)" stroke="#c4c4c4" stroke-width="1"/></svg>
<div class="a" style="left:2314px;top:823px;width:48px;height:43px;background:#000;border:1px solid #1a1a1a;"></div>
<div class="a" style="left:2316px;top:825px;width:44px;height:39px;border:1.5px solid #fff;"></div>
<svg class="a" style="left:2365px;top:823px;" width="18" height="16" viewBox="0 0 18 16"><path d="M3 3H8Q12.5 3 12.5 8V13" fill="none" stroke="#222" stroke-width="1.2"/><path d="M0.5 3L4.5 0.8V5.2ZM12.5 15.5L10.2 11.8H14.8Z" fill="#222"/></svg>
<svg class="a" style="left:2314px;top:871px;" width="19" height="15" viewBox="0 0 19 15"><rect x="4.5" y="3.5" width="13" height="11" fill="#fff" stroke="#333" stroke-width="1"/><rect x="0.5" y="0.5" width="14" height="11" fill="#2a2a2a" stroke="#000" stroke-width="1"/></svg>
<span id="t45" class="t" style="left:2396.5px;top:823.9px;font-size:12.5px;color:#1f1f1f;">R :</span>
<span id="t46" class="t" style="left:2426.5px;top:823.9px;font-size:12.5px;color:#1f1f1f;transform:scaleX(0.9348);">0</span>
<span id="t47" class="t" style="left:2396.5px;top:839.0px;font-size:12.5px;color:#1f1f1f;transform:scaleX(0.9597);">G :</span>
<span id="t48" class="t" style="left:2426.5px;top:839.0px;font-size:12.5px;color:#1f1f1f;transform:scaleX(0.9348);">0</span>
<span id="t49" class="t" style="left:2396.5px;top:854.0px;font-size:12.5px;color:#1f1f1f;transform:scaleX(1.0460);">B :</span>
<span id="t50" class="t" style="left:2426.5px;top:854.0px;font-size:12.5px;color:#1f1f1f;transform:scaleX(0.9348);">0</span>
<span id="t51" class="t" style="left:2396.5px;top:869.1px;font-size:12.5px;color:#1f1f1f;transform:scaleX(1.0964);">A :</span>
<span id="t52" class="t" style="left:2419.5px;top:869.1px;font-size:12.5px;color:#1f1f1f;transform:scaleX(0.9828);">255</span>
<span id="t53" class="t" style="left:2471.0px;top:823.4px;font-size:12.5px;color:#1f1f1f;transform:scaleX(0.9733);">HTML:</span>
<div class="a" style="left:2454px;top:839px;width:72px;height:20px;background:#fff;border:1px solid #b5b5b5;"></div>
<span id="t54" class="t" style="left:2469.5px;top:843.9px;font-size:12.5px;color:#1f1f1f;transform:scaleX(0.9828);">000000</span>
<svg class="a" style="left:2460px;top:865px;" width="26" height="26" viewBox="0 0 32 32"><path d="M11 22H2V2H14L17 5" fill="none" stroke="#5f5f63" stroke-width="2.2"/><path d="M11 8H23L31 16V30.5H11Z" fill="#fafafa" stroke="#5f5f63" stroke-width="2.2"/><path d="M23 8V16H31Z" fill="#5f5f63"/></svg>
<svg class="a" style="left:2496px;top:864px;" width="26" height="27" viewBox="0 -1 32 33"><path d="M13 24H2V5H24V11" fill="none" stroke="#5f5f63" stroke-width="2.2"/><path d="M8 5V2.5H11C11 -0.5 16 -0.5 16 2.5H19V7H8Z" fill="#5f5f63"/><path d="M15 13H24L31 20V30.5H15Z" fill="#fafafa" stroke="#2f6fc0" stroke-width="2.2"/><path d="M24 13V20H31Z" fill="#2f6fc0"/></svg>
<div class="a" style="left:2297px;top:910px;width:235px;height:1px;background:#d3d3d3;"></div>
<div class="a" style="left:2303px;top:919px;width:224px;height:223px;background:#e1e1e1;border:1px solid #cdcdcd;"></div>
<div class="a" style="left:2304px;top:920px;width:222px;height:221px;border:1px solid #ececec;"></div>
<svg class="a" style="left:2393px;top:1009px;" width="44" height="44" viewBox="0 0 44 44"><circle cx="22" cy="22" r="22" fill="#1fffca"/><path d="M37.6 6.4A22 22 0 0 1 6.4 37.6Z" fill="#00e3ab"/><path d="M10.5 22H33.5M22 10.5V33.5" stroke="#fff" stroke-width="4"/></svg>
<div class="a" style="left:2297px;top:1149px;width:235px;height:1px;background:#d3d3d3;"></div>
</aside>
<footer id="status-bar" >
<div class="a" style="left:2px;top:1438px;width:2530px;height:27px;background:#f9f9f9;"></div>
<div class="a" style="left:2px;top:1438px;width:2530px;height:1px;background:#d6d6d6;"></div>
<span id="t55" class="t" style="left:5.0px;top:1444.3px;font-size:18px;color:#1f1f1f;transform:scaleX(0.9774);">Для вывода справки нажмите F1</span>
<span id="t56" class="t" style="left:1382.5px;top:1443.8px;font-size:18px;color:#1f1f1f;transform:scaleX(1.0486);">button-add.png</span>
<div class="a" style="left:1760px;top:1442px;width:1px;height:22px;background:#d0d0d0;"></div>
<div class="a" style="left:1949px;top:1442px;width:1px;height:22px;background:#d0d0d0;"></div>
<div class="a" style="left:2181px;top:1442px;width:1px;height:22px;background:#d0d0d0;"></div>
<div class="a" style="left:2297px;top:1442px;width:1px;height:22px;background:#d0d0d0;"></div>
<div class="a" style="left:2407px;top:1442px;width:1px;height:22px;background:#d0d0d0;"></div>
<div class="a" style="left:2505px;top:1442px;width:1px;height:22px;background:#d0d0d0;"></div>
<span id="t57" class="t" style="left:1766.0px;top:1443.8px;font-size:18px;color:#1f1f1f;transform:scaleX(0.9354);">1 Кб</span>
<span id="t58" class="t" style="left:1953.0px;top:1443.8px;font-size:18px;color:#1f1f1f;transform:scaleX(0.9708);">48x48 - RGB/A - 32 BPP - 72</span>
<svg class="a" style="left:2186px;top:1443px;" width="21" height="21" viewBox="0 0 21 21"><path d="M6 0V9M1 4.5H11" stroke="#c0392b" stroke-width="1.3"/><rect x="8.5" y="8.5" width="11" height="11" fill="#dcdcdc" stroke="#444" stroke-width="1" stroke-dasharray="1.5 1.5"/></svg>
<svg class="a" style="left:2298px;top:1442px;" width="22" height="22" viewBox="0 0 22 22"><rect x="6.5" y="6.5" width="13" height="13" fill="#dcdcdc" stroke="#444" stroke-width="1" stroke-dasharray="1.5 1.5"/><path d="M6 3H19M16.5 0.5L19.5 3L16.5 5.5M3 6V19M0.5 16.5L3 19.5L5.5 16.5" stroke="#c0392b" stroke-width="1.3" fill="none"/></svg>
<svg class="a" style="left:2411px;top:1442px;" width="22" height="22" viewBox="0 0 22 22"><circle cx="8.5" cy="8.5" r="6.5" fill="none" stroke="#2e75b6" stroke-width="2.6"/><path d="M13.5 13.5L20 20" stroke="#2e75b6" stroke-width="3.2" stroke-linecap="round"/></svg>
<span id="t59" class="t" style="left:2439.5px;top:1443.8px;font-size:18px;color:#1f1f1f;transform:scaleX(0.9632);">2300%</span>
<svg class="a" style="left:2510px;top:1443px;" width="20" height="20" viewBox="0 0 20 20"><path d="M0.5 0.5H19.5V19.5H0.5Z" fill="#8e44ad"/><rect x="3.5" y="0.5" width="13" height="8.5" fill="#f4f4f4"/><rect x="5" y="2.5" width="10" height="1.4" fill="#9a9a9a"/><rect x="5" y="5.5" width="10" height="1.4" fill="#9a9a9a"/><rect x="4.5" y="12.5" width="11" height="7" fill="#f4f4f4"/><rect x="8.5" y="14.5" width="3" height="5" fill="#8e44ad"/></svg>
</footer>
<section id="brightness-contrast-dialog" role="dialog" aria-label="Настройка Яркости - Контраста">
<div class="a" style="left:1428px;top:384px;width:793px;height:744px;background:#f9f9f9;border-radius:12px;box-shadow:0 30px 64px 4px rgba(0,0,0,0.27),0 2px 24px 1px rgba(0,0,0,0.17);border:1px solid #0078d4;overflow:hidden;"><div class="a" style="left:-1px;top:-1px;width:793px;height:45px;background:#0078d4;"></div><div class="a" style="left:0;top:588px;width:791px;height:160px;background:#f0f0f0;"></div><div class="a" style="left:0;top:587px;width:791px;height:1px;background:#dfdfdf;"></div><div class="a" style="left:0;top:653px;width:791px;height:1px;background:#dfdfdf;"></div></div>
<span id="t60" class="t" style="left:1440.5px;top:398.8px;font-size:18px;color:#fff;transform:scaleX(1.0331);">Настройка Яркости - Контраста</span>
<svg class="a" style="left:2186px;top:399px;" width="17" height="17" viewBox="0 0 17 17"><path d="M1 1L15.5 15.5M15.5 1L1 15.5" stroke="#fff" stroke-width="1.5"/></svg>
<svg class="a" style="left:1461px;top:468px;" width="92" height="84" viewBox="0 0 92 84"><rect x="11.2" y="3" width="6.6" height="78" fill="#474747" stroke="#ececec" stroke-width="2.4" paint-order="stroke"/><rect x="41.2" y="3" width="6.6" height="78" fill="#474747" stroke="#ececec" stroke-width="2.4" paint-order="stroke"/><rect x="72.5" y="3" width="6.6" height="78" fill="#474747" stroke="#ececec" stroke-width="2.4" paint-order="stroke"/><rect x="2.5" y="33.3" width="24.4" height="10.4" fill="#2f6fc0" stroke="#ececec" stroke-width="2.4" paint-order="stroke"/><rect x="32.3" y="54" width="24.4" height="10.4" fill="#2f6fc0" stroke="#ececec" stroke-width="2.4" paint-order="stroke"/><rect x="63.6" y="21" width="24.4" height="10.4" fill="#2f6fc0" stroke="#ececec" stroke-width="2.4" paint-order="stroke"/></svg>
<span id="t61" class="t" style="left:1601.0px;top:459.6px;font-size:27px;color:#1f5a9a;transform:scaleX(1.0388);">Настройка Яркости - Контраста</span>
<span id="t62" class="t" style="left:1600.5px;top:517.3px;font-size:18px;color:#1f1f1f;transform:scaleX(0.9826);">Здесь можно настроить Яркость / Контрастность текущего</span>
<span id="t63" class="t" style="left:1600.5px;top:542.3px;font-size:18px;color:#1f1f1f;transform:scaleX(0.9705);">изображения (или его части, если она выбрана):</span>
<span id="t64" class="t" style="left:1615.0px;top:597.3px;font-size:18px;color:#111;font-weight:700;transform:scaleX(0.9951);">• Яркость •</span>
<span id="t65" class="t" style="left:1638.5px;top:634.3px;font-size:18px;color:#1f1f1f;">-100</span>
<span id="t66" class="t" style="left:1796.0px;top:634.3px;font-size:18px;color:#1f1f1f;">0</span>
<span id="t67" class="t" style="left:1930.5px;top:634.3px;font-size:18px;color:#1f1f1f;transform:scaleX(0.9865);">+100</span>
<div class="a" style="left:1639px;top:657px;width:1px;height:4px;background:#c4c4c4;"></div>
<div class="a" style="left:1639px;top:697px;width:1px;height:4px;background:#c4c4c4;"></div>
<div class="a" style="left:1960px;top:657px;width:1px;height:4px;background:#c4c4c4;"></div>
<div class="a" style="left:1960px;top:697px;width:1px;height:4px;background:#c4c4c4;"></div>
<div class="a" style="left:1631px;top:676px;width:338px;height:6px;background:#e4e4e4;border:1px solid #d3d3d3;"></div>
<div class="a" style="left:1792px;top:662px;width:16px;height:33px;background:#0078d7;"></div>
<div class="a" style="left:1989px;top:667px;width:77px;height:33px;background:#fff;border:1px solid #8a8a8a;"></div>
<span id="t68" class="t" style="left:1998.0px;top:675.1px;font-size:18px;color:#1f1f1f;transform:scaleX(0.9366);">-0</span>
<div class="a" style="left:2014px;top:675px;width:1px;height:20px;background:#000;"></div>
<span id="t69" class="t" style="left:1615.0px;top:757.8px;font-size:18px;color:#111;font-weight:700;transform:scaleX(0.9862);">• Контрастность •</span>
<span id="t70" class="t" style="left:1638.5px;top:797.3px;font-size:18px;color:#1f1f1f;">-100</span>
<span id="t71" class="t" style="left:1796.0px;top:797.3px;font-size:18px;color:#1f1f1f;">0</span>
<span id="t72" class="t" style="left:1930.5px;top:797.3px;font-size:18px;color:#1f1f1f;transform:scaleX(0.9865);">+100</span>
<div class="a" style="left:1639px;top:819px;width:1px;height:4px;background:#c4c4c4;"></div>
<div class="a" style="left:1639px;top:859px;width:1px;height:4px;background:#c4c4c4;"></div>
<div class="a" style="left:1960px;top:819px;width:1px;height:4px;background:#c4c4c4;"></div>
<div class="a" style="left:1960px;top:859px;width:1px;height:4px;background:#c4c4c4;"></div>
<div class="a" style="left:1631px;top:838px;width:338px;height:6px;background:#e4e4e4;border:1px solid #d3d3d3;"></div>
<div class="a" style="left:1902px;top:824px;width:16px;height:33px;background:#0078d7;"></div>
<div class="a" style="left:1989px;top:829px;width:77px;height:33px;background:#fff;border:1px solid #8a8a8a;"></div>
<span id="t73" class="t" style="left:1998.0px;top:837.1px;font-size:18px;color:#1f1f1f;transform:scaleX(0.9735);">69</span>
<div class="a" style="left:1908px;top:921px;width:20px;height:20px;background:#0067c0;border-radius:3.5px;"></div>
<svg class="a" style="left:1908px;top:921px;" width="20" height="20" viewBox="0 0 20 20"><path d="M4.5 10.2L8.4 14L15.5 6.3" fill="none" stroke="#fff" stroke-width="1.8"/></svg>
<span id="t74" class="t" style="left:1938.5px;top:922.8px;font-size:18px;color:#1f1f1f;transform:scaleX(0.9966);">Предварительный просмотр</span>
<div class="a" style="left:1912px;top:990px;width:129px;height:32px;background:#fdfdfd;border:2px solid #0067c0;border-radius:5px;"></div>
<span id="t75" class="t" style="left:1964.5px;top:997.8px;font-size:18px;color:#1f1f1f;transform:scaleX(0.9033);">OK</span>
<div class="a" style="left:2063px;top:990px;width:129px;height:32px;background:#fdfdfd;border:1px solid #d0d0d0;border-radius:5px;"></div>
<span id="t76" class="t" style="left:2096.0px;top:997.8px;font-size:18px;color:#1f1f1f;transform:scaleX(0.9521);">Отмена</span>
<svg class="a" style="left:1457px;top:1061px;" width="40" height="40" viewBox="0 0 40 40"><circle cx="20" cy="20" r="18" fill="#7cb8e6" stroke="#1a5fb4" stroke-width="3.4"/><rect x="17.8" y="16.5" width="4.4" height="13.5" fill="#fff"/><rect x="17.8" y="9.5" width="4.4" height="4.4" fill="#fff"/></svg>
<span id="t77" class="t" style="left:1522.0px;top:1063.2px;font-size:17.5px;color:#333;transform:scaleX(0.9803);">Допустимые значения находятся в диапазоне от -100 до +100 (где 0 означает</span>
<span id="t78" class="t" style="left:1517.5px;top:1086.2px;font-size:17.5px;color:#333;transform:scaleX(0.9620);">отсутствие изменений).</span>
</section>
<div class="a" style="left:0px;top:0px;width:2534px;height:1466px;border:2px solid #bdbdbd;border-radius:11px;border-top-color:#c2c2c2;border-right:3px solid #bcbcbc;border-bottom:3px solid #bcbcbc;pointer-events:none;"></div>
<svg class="a" style="left:0;top:0" width="2534" height="1466" viewBox="0 0 2534 1466"><path d="M0 0H12C5 0 0 5 0 12Z M2534 0V12C2534 5 2529 0 2522 0Z M0 1466V1454C0 1461 5 1466 12 1466Z M2534 1466H2522C2529 1466 2534 1461 2534 1454Z" fill="#e9e9e9"/></svg>
</body></html>
